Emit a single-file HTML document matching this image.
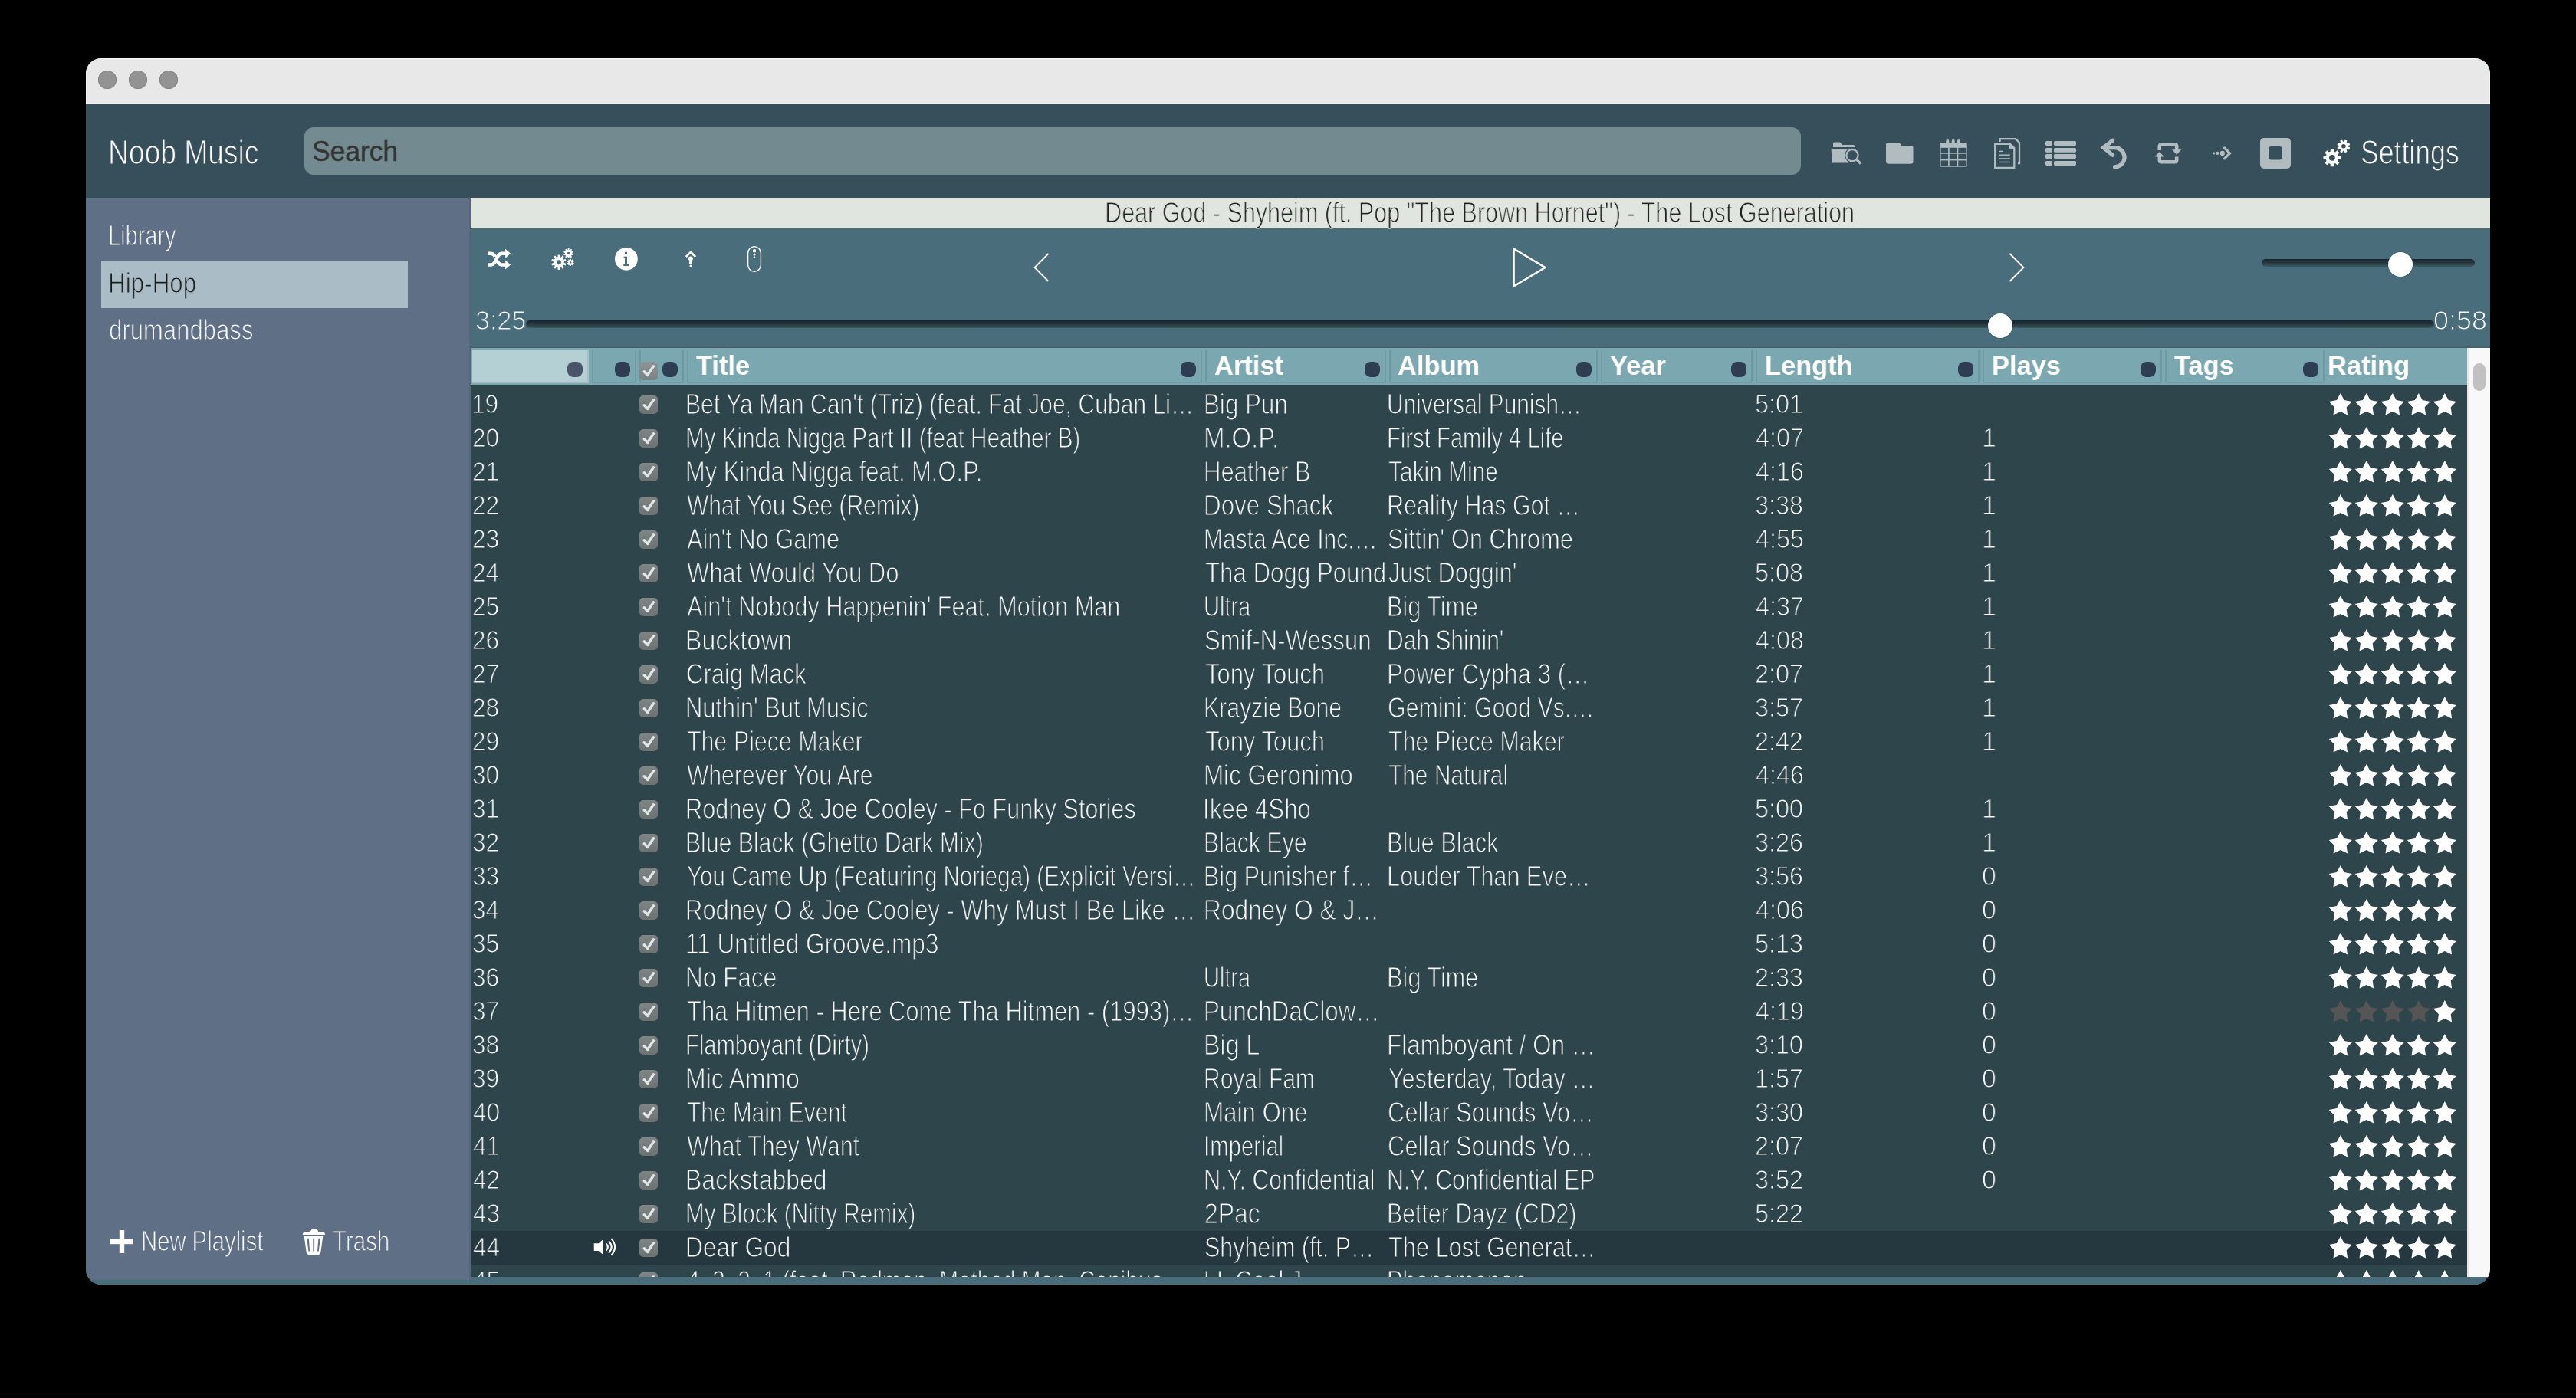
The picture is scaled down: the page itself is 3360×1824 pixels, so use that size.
<!DOCTYPE html><html><head><meta charset="utf-8"><style>
html,body{margin:0;padding:0;background:#000;width:3360px;height:1824px;overflow:hidden;}
.a{position:absolute;}
.t{position:absolute;white-space:pre;line-height:1;transform-origin:0 0;font-family:"Liberation Sans", sans-serif;will-change:transform;}
svg{position:absolute;overflow:visible;}
</style></head><body>
<div class="a" style="left:112px;top:76px;width:3136px;height:1600px;border-radius:20px;overflow:hidden;background:#4a6d7c;">
<div class="a" style="left:-112px;top:-76px;width:3360px;height:1824px;">
<div class="a" style="left:112px;top:76px;width:3136px;height:60px;background:#e8e8e8;box-shadow:inset 0 1px 0 rgba(255,255,255,.9),inset 1px 0 0 rgba(255,255,255,.5),inset -1px 0 0 rgba(255,255,255,.5),inset 0 -1px 0 rgba(255,255,255,.5);"></div>
<div class="a" style="left:128px;top:92px;width:24px;height:24px;border-radius:50%;background:#939393;box-shadow:inset 0 0 0 1px #858585;"></div>
<div class="a" style="left:168px;top:92px;width:24px;height:24px;border-radius:50%;background:#939393;box-shadow:inset 0 0 0 1px #858585;"></div>
<div class="a" style="left:208px;top:92px;width:24px;height:24px;border-radius:50%;background:#939393;box-shadow:inset 0 0 0 1px #858585;"></div>
<div class="a" style="left:112px;top:136px;width:3136px;height:122px;background:#374f5b;"></div>
<div class="a" style="left:397px;top:166px;width:1952px;height:62px;background:#728a90;border-radius:12px;"></div>
<div class="a" style="left:112px;top:258px;width:502px;height:1412px;background:#5e6f86;"></div>
<div class="a" style="left:612px;top:258px;width:2px;height:1412px;background:#56667c;"></div>
<div class="a" style="left:132px;top:340px;width:400px;height:62px;background:#aabdc6;"></div>
<div class="a" style="left:614px;top:258px;width:2634px;height:40px;background:#e0e6df;"></div>
<div class="a" style="left:614px;top:298px;width:2634px;height:156px;background:#4a6d7c;"></div>
<div class="a" style="left:614px;top:451px;width:2634px;height:3px;background:#44636f;"></div>
<div class="a" style="left:614px;top:454px;width:2604px;height:48px;background:#7ba8b0;"></div>
<div class="a" style="left:614px;top:502px;width:2604px;height:1164px;background:#2d454b;"></div>
<div class="a" style="left:614px;top:1606px;width:2604px;height:44px;background:#253840;"></div>
<div class="a" style="left:3218px;top:454px;width:30px;height:1212px;background:#f8f8f8;box-shadow:inset 2px 0 0 #e6e6e6;"></div>
<div class="a" style="left:3226px;top:474px;width:16px;height:36px;background:#c1c1c1;border-radius:8px;"></div>
<div class="a" style="left:112px;top:1670px;width:502px;height:6px;background:#4a6d7c;"></div>
<div class="a" style="left:616px;top:456px;width:152px;height:44px;box-sizing:border-box;background:#b5d0d4;border-right:2px solid #a9bfc3;border-bottom:2px solid #a9bfc3;"></div>
<div class="a" style="left:740px;top:472px;width:20px;height:20px;border-radius:8px;background:#495468;"></div>
<div class="a" style="left:772px;top:456px;width:58px;height:44px;box-sizing:border-box;border:2px solid #6e9aa2;border-top:none;"></div>
<div class="a" style="left:802px;top:472px;width:20px;height:20px;border-radius:8px;background:#2e3e52;"></div>
<div class="a" style="left:834px;top:456px;width:58px;height:44px;box-sizing:border-box;border:2px solid #6e9aa2;border-top:none;"></div>
<div class="a" style="left:864px;top:472px;width:20px;height:20px;border-radius:8px;background:#2e3e52;"></div>
<div class="a" style="left:896px;top:456px;width:672px;height:44px;box-sizing:border-box;border:2px solid #6e9aa2;border-top:none;"></div>
<div class="a" style="left:1540px;top:472px;width:20px;height:20px;border-radius:8px;background:#2e3e52;"></div>
<div class="a" style="left:1572px;top:456px;width:236px;height:44px;box-sizing:border-box;border:2px solid #6e9aa2;border-top:none;"></div>
<div class="a" style="left:1780px;top:472px;width:20px;height:20px;border-radius:8px;background:#2e3e52;"></div>
<div class="a" style="left:1812px;top:456px;width:272px;height:44px;box-sizing:border-box;border:2px solid #6e9aa2;border-top:none;"></div>
<div class="a" style="left:2056px;top:472px;width:20px;height:20px;border-radius:8px;background:#2e3e52;"></div>
<div class="a" style="left:2088px;top:456px;width:198px;height:44px;box-sizing:border-box;border:2px solid #6e9aa2;border-top:none;"></div>
<div class="a" style="left:2258px;top:472px;width:20px;height:20px;border-radius:8px;background:#2e3e52;"></div>
<div class="a" style="left:2290px;top:456px;width:292px;height:44px;box-sizing:border-box;border:2px solid #6e9aa2;border-top:none;"></div>
<div class="a" style="left:2554px;top:472px;width:20px;height:20px;border-radius:8px;background:#2e3e52;"></div>
<div class="a" style="left:2586px;top:456px;width:234px;height:44px;box-sizing:border-box;border:2px solid #6e9aa2;border-top:none;"></div>
<div class="a" style="left:2792px;top:472px;width:20px;height:20px;border-radius:8px;background:#2e3e52;"></div>
<div class="a" style="left:2824px;top:456px;width:208px;height:44px;box-sizing:border-box;border:2px solid #6e9aa2;border-top:none;"></div>
<div class="a" style="left:3004px;top:472px;width:20px;height:20px;border-radius:8px;background:#2e3e52;"></div>
<div class="a" style="left:834px;top:472px;width:24px;height:24px;border-radius:5px;background:linear-gradient(#8c9495,#7a8283);"></div>
<svg style="left:834px;top:472px" width="24" height="24"><path d="M6.2 12.8 L10.6 17.4 L18.4 5.8" fill="none" stroke="#e1e7e8" stroke-width="3.4" stroke-linecap="round" stroke-linejoin="round"/></svg>
<div class="a" style="left:834px;top:516px;width:24px;height:24px;border-radius:5px;background:linear-gradient(#7f8485,#6c7272);"></div>
<svg style="left:834px;top:516px" width="24" height="24"><path d="M6.2 12.8 L10.6 17.4 L18.4 5.8" fill="none" stroke="#e1e7e8" stroke-width="3.4" stroke-linecap="round" stroke-linejoin="round"/></svg>
<svg style="left:3000px;top:506px" width="220" height="44"><path d="M52.80,7.00 L57.68,16.09 L67.83,17.92 L60.69,25.36 L62.09,35.58 L52.80,31.10 L43.51,35.58 L44.91,25.36 L37.77,17.92 L47.92,16.09Z" fill="#fff"/><path d="M86.80,7.00 L91.68,16.09 L101.83,17.92 L94.69,25.36 L96.09,35.58 L86.80,31.10 L77.51,35.58 L78.91,25.36 L71.77,17.92 L81.92,16.09Z" fill="#fff"/><path d="M120.80,7.00 L125.68,16.09 L135.83,17.92 L128.69,25.36 L130.09,35.58 L120.80,31.10 L111.51,35.58 L112.91,25.36 L105.77,17.92 L115.92,16.09Z" fill="#fff"/><path d="M154.80,7.00 L159.68,16.09 L169.83,17.92 L162.69,25.36 L164.09,35.58 L154.80,31.10 L145.51,35.58 L146.91,25.36 L139.77,17.92 L149.92,16.09Z" fill="#fff"/><path d="M188.80,7.00 L193.68,16.09 L203.83,17.92 L196.69,25.36 L198.09,35.58 L188.80,31.10 L179.51,35.58 L180.91,25.36 L173.77,17.92 L183.92,16.09Z" fill="#fff"/></svg>
<div class="a" style="left:834px;top:560px;width:24px;height:24px;border-radius:5px;background:linear-gradient(#7f8485,#6c7272);"></div>
<svg style="left:834px;top:560px" width="24" height="24"><path d="M6.2 12.8 L10.6 17.4 L18.4 5.8" fill="none" stroke="#e1e7e8" stroke-width="3.4" stroke-linecap="round" stroke-linejoin="round"/></svg>
<svg style="left:3000px;top:550px" width="220" height="44"><path d="M52.80,7.00 L57.68,16.09 L67.83,17.92 L60.69,25.36 L62.09,35.58 L52.80,31.10 L43.51,35.58 L44.91,25.36 L37.77,17.92 L47.92,16.09Z" fill="#fff"/><path d="M86.80,7.00 L91.68,16.09 L101.83,17.92 L94.69,25.36 L96.09,35.58 L86.80,31.10 L77.51,35.58 L78.91,25.36 L71.77,17.92 L81.92,16.09Z" fill="#fff"/><path d="M120.80,7.00 L125.68,16.09 L135.83,17.92 L128.69,25.36 L130.09,35.58 L120.80,31.10 L111.51,35.58 L112.91,25.36 L105.77,17.92 L115.92,16.09Z" fill="#fff"/><path d="M154.80,7.00 L159.68,16.09 L169.83,17.92 L162.69,25.36 L164.09,35.58 L154.80,31.10 L145.51,35.58 L146.91,25.36 L139.77,17.92 L149.92,16.09Z" fill="#fff"/><path d="M188.80,7.00 L193.68,16.09 L203.83,17.92 L196.69,25.36 L198.09,35.58 L188.80,31.10 L179.51,35.58 L180.91,25.36 L173.77,17.92 L183.92,16.09Z" fill="#fff"/></svg>
<div class="a" style="left:834px;top:604px;width:24px;height:24px;border-radius:5px;background:linear-gradient(#7f8485,#6c7272);"></div>
<svg style="left:834px;top:604px" width="24" height="24"><path d="M6.2 12.8 L10.6 17.4 L18.4 5.8" fill="none" stroke="#e1e7e8" stroke-width="3.4" stroke-linecap="round" stroke-linejoin="round"/></svg>
<svg style="left:3000px;top:594px" width="220" height="44"><path d="M52.80,7.00 L57.68,16.09 L67.83,17.92 L60.69,25.36 L62.09,35.58 L52.80,31.10 L43.51,35.58 L44.91,25.36 L37.77,17.92 L47.92,16.09Z" fill="#fff"/><path d="M86.80,7.00 L91.68,16.09 L101.83,17.92 L94.69,25.36 L96.09,35.58 L86.80,31.10 L77.51,35.58 L78.91,25.36 L71.77,17.92 L81.92,16.09Z" fill="#fff"/><path d="M120.80,7.00 L125.68,16.09 L135.83,17.92 L128.69,25.36 L130.09,35.58 L120.80,31.10 L111.51,35.58 L112.91,25.36 L105.77,17.92 L115.92,16.09Z" fill="#fff"/><path d="M154.80,7.00 L159.68,16.09 L169.83,17.92 L162.69,25.36 L164.09,35.58 L154.80,31.10 L145.51,35.58 L146.91,25.36 L139.77,17.92 L149.92,16.09Z" fill="#fff"/><path d="M188.80,7.00 L193.68,16.09 L203.83,17.92 L196.69,25.36 L198.09,35.58 L188.80,31.10 L179.51,35.58 L180.91,25.36 L173.77,17.92 L183.92,16.09Z" fill="#fff"/></svg>
<div class="a" style="left:834px;top:648px;width:24px;height:24px;border-radius:5px;background:linear-gradient(#7f8485,#6c7272);"></div>
<svg style="left:834px;top:648px" width="24" height="24"><path d="M6.2 12.8 L10.6 17.4 L18.4 5.8" fill="none" stroke="#e1e7e8" stroke-width="3.4" stroke-linecap="round" stroke-linejoin="round"/></svg>
<svg style="left:3000px;top:638px" width="220" height="44"><path d="M52.80,7.00 L57.68,16.09 L67.83,17.92 L60.69,25.36 L62.09,35.58 L52.80,31.10 L43.51,35.58 L44.91,25.36 L37.77,17.92 L47.92,16.09Z" fill="#fff"/><path d="M86.80,7.00 L91.68,16.09 L101.83,17.92 L94.69,25.36 L96.09,35.58 L86.80,31.10 L77.51,35.58 L78.91,25.36 L71.77,17.92 L81.92,16.09Z" fill="#fff"/><path d="M120.80,7.00 L125.68,16.09 L135.83,17.92 L128.69,25.36 L130.09,35.58 L120.80,31.10 L111.51,35.58 L112.91,25.36 L105.77,17.92 L115.92,16.09Z" fill="#fff"/><path d="M154.80,7.00 L159.68,16.09 L169.83,17.92 L162.69,25.36 L164.09,35.58 L154.80,31.10 L145.51,35.58 L146.91,25.36 L139.77,17.92 L149.92,16.09Z" fill="#fff"/><path d="M188.80,7.00 L193.68,16.09 L203.83,17.92 L196.69,25.36 L198.09,35.58 L188.80,31.10 L179.51,35.58 L180.91,25.36 L173.77,17.92 L183.92,16.09Z" fill="#fff"/></svg>
<div class="a" style="left:834px;top:692px;width:24px;height:24px;border-radius:5px;background:linear-gradient(#7f8485,#6c7272);"></div>
<svg style="left:834px;top:692px" width="24" height="24"><path d="M6.2 12.8 L10.6 17.4 L18.4 5.8" fill="none" stroke="#e1e7e8" stroke-width="3.4" stroke-linecap="round" stroke-linejoin="round"/></svg>
<svg style="left:3000px;top:682px" width="220" height="44"><path d="M52.80,7.00 L57.68,16.09 L67.83,17.92 L60.69,25.36 L62.09,35.58 L52.80,31.10 L43.51,35.58 L44.91,25.36 L37.77,17.92 L47.92,16.09Z" fill="#fff"/><path d="M86.80,7.00 L91.68,16.09 L101.83,17.92 L94.69,25.36 L96.09,35.58 L86.80,31.10 L77.51,35.58 L78.91,25.36 L71.77,17.92 L81.92,16.09Z" fill="#fff"/><path d="M120.80,7.00 L125.68,16.09 L135.83,17.92 L128.69,25.36 L130.09,35.58 L120.80,31.10 L111.51,35.58 L112.91,25.36 L105.77,17.92 L115.92,16.09Z" fill="#fff"/><path d="M154.80,7.00 L159.68,16.09 L169.83,17.92 L162.69,25.36 L164.09,35.58 L154.80,31.10 L145.51,35.58 L146.91,25.36 L139.77,17.92 L149.92,16.09Z" fill="#fff"/><path d="M188.80,7.00 L193.68,16.09 L203.83,17.92 L196.69,25.36 L198.09,35.58 L188.80,31.10 L179.51,35.58 L180.91,25.36 L173.77,17.92 L183.92,16.09Z" fill="#fff"/></svg>
<div class="a" style="left:834px;top:736px;width:24px;height:24px;border-radius:5px;background:linear-gradient(#7f8485,#6c7272);"></div>
<svg style="left:834px;top:736px" width="24" height="24"><path d="M6.2 12.8 L10.6 17.4 L18.4 5.8" fill="none" stroke="#e1e7e8" stroke-width="3.4" stroke-linecap="round" stroke-linejoin="round"/></svg>
<svg style="left:3000px;top:726px" width="220" height="44"><path d="M52.80,7.00 L57.68,16.09 L67.83,17.92 L60.69,25.36 L62.09,35.58 L52.80,31.10 L43.51,35.58 L44.91,25.36 L37.77,17.92 L47.92,16.09Z" fill="#fff"/><path d="M86.80,7.00 L91.68,16.09 L101.83,17.92 L94.69,25.36 L96.09,35.58 L86.80,31.10 L77.51,35.58 L78.91,25.36 L71.77,17.92 L81.92,16.09Z" fill="#fff"/><path d="M120.80,7.00 L125.68,16.09 L135.83,17.92 L128.69,25.36 L130.09,35.58 L120.80,31.10 L111.51,35.58 L112.91,25.36 L105.77,17.92 L115.92,16.09Z" fill="#fff"/><path d="M154.80,7.00 L159.68,16.09 L169.83,17.92 L162.69,25.36 L164.09,35.58 L154.80,31.10 L145.51,35.58 L146.91,25.36 L139.77,17.92 L149.92,16.09Z" fill="#fff"/><path d="M188.80,7.00 L193.68,16.09 L203.83,17.92 L196.69,25.36 L198.09,35.58 L188.80,31.10 L179.51,35.58 L180.91,25.36 L173.77,17.92 L183.92,16.09Z" fill="#fff"/></svg>
<div class="a" style="left:834px;top:780px;width:24px;height:24px;border-radius:5px;background:linear-gradient(#7f8485,#6c7272);"></div>
<svg style="left:834px;top:780px" width="24" height="24"><path d="M6.2 12.8 L10.6 17.4 L18.4 5.8" fill="none" stroke="#e1e7e8" stroke-width="3.4" stroke-linecap="round" stroke-linejoin="round"/></svg>
<svg style="left:3000px;top:770px" width="220" height="44"><path d="M52.80,7.00 L57.68,16.09 L67.83,17.92 L60.69,25.36 L62.09,35.58 L52.80,31.10 L43.51,35.58 L44.91,25.36 L37.77,17.92 L47.92,16.09Z" fill="#fff"/><path d="M86.80,7.00 L91.68,16.09 L101.83,17.92 L94.69,25.36 L96.09,35.58 L86.80,31.10 L77.51,35.58 L78.91,25.36 L71.77,17.92 L81.92,16.09Z" fill="#fff"/><path d="M120.80,7.00 L125.68,16.09 L135.83,17.92 L128.69,25.36 L130.09,35.58 L120.80,31.10 L111.51,35.58 L112.91,25.36 L105.77,17.92 L115.92,16.09Z" fill="#fff"/><path d="M154.80,7.00 L159.68,16.09 L169.83,17.92 L162.69,25.36 L164.09,35.58 L154.80,31.10 L145.51,35.58 L146.91,25.36 L139.77,17.92 L149.92,16.09Z" fill="#fff"/><path d="M188.80,7.00 L193.68,16.09 L203.83,17.92 L196.69,25.36 L198.09,35.58 L188.80,31.10 L179.51,35.58 L180.91,25.36 L173.77,17.92 L183.92,16.09Z" fill="#fff"/></svg>
<div class="a" style="left:834px;top:824px;width:24px;height:24px;border-radius:5px;background:linear-gradient(#7f8485,#6c7272);"></div>
<svg style="left:834px;top:824px" width="24" height="24"><path d="M6.2 12.8 L10.6 17.4 L18.4 5.8" fill="none" stroke="#e1e7e8" stroke-width="3.4" stroke-linecap="round" stroke-linejoin="round"/></svg>
<svg style="left:3000px;top:814px" width="220" height="44"><path d="M52.80,7.00 L57.68,16.09 L67.83,17.92 L60.69,25.36 L62.09,35.58 L52.80,31.10 L43.51,35.58 L44.91,25.36 L37.77,17.92 L47.92,16.09Z" fill="#fff"/><path d="M86.80,7.00 L91.68,16.09 L101.83,17.92 L94.69,25.36 L96.09,35.58 L86.80,31.10 L77.51,35.58 L78.91,25.36 L71.77,17.92 L81.92,16.09Z" fill="#fff"/><path d="M120.80,7.00 L125.68,16.09 L135.83,17.92 L128.69,25.36 L130.09,35.58 L120.80,31.10 L111.51,35.58 L112.91,25.36 L105.77,17.92 L115.92,16.09Z" fill="#fff"/><path d="M154.80,7.00 L159.68,16.09 L169.83,17.92 L162.69,25.36 L164.09,35.58 L154.80,31.10 L145.51,35.58 L146.91,25.36 L139.77,17.92 L149.92,16.09Z" fill="#fff"/><path d="M188.80,7.00 L193.68,16.09 L203.83,17.92 L196.69,25.36 L198.09,35.58 L188.80,31.10 L179.51,35.58 L180.91,25.36 L173.77,17.92 L183.92,16.09Z" fill="#fff"/></svg>
<div class="a" style="left:834px;top:868px;width:24px;height:24px;border-radius:5px;background:linear-gradient(#7f8485,#6c7272);"></div>
<svg style="left:834px;top:868px" width="24" height="24"><path d="M6.2 12.8 L10.6 17.4 L18.4 5.8" fill="none" stroke="#e1e7e8" stroke-width="3.4" stroke-linecap="round" stroke-linejoin="round"/></svg>
<svg style="left:3000px;top:858px" width="220" height="44"><path d="M52.80,7.00 L57.68,16.09 L67.83,17.92 L60.69,25.36 L62.09,35.58 L52.80,31.10 L43.51,35.58 L44.91,25.36 L37.77,17.92 L47.92,16.09Z" fill="#fff"/><path d="M86.80,7.00 L91.68,16.09 L101.83,17.92 L94.69,25.36 L96.09,35.58 L86.80,31.10 L77.51,35.58 L78.91,25.36 L71.77,17.92 L81.92,16.09Z" fill="#fff"/><path d="M120.80,7.00 L125.68,16.09 L135.83,17.92 L128.69,25.36 L130.09,35.58 L120.80,31.10 L111.51,35.58 L112.91,25.36 L105.77,17.92 L115.92,16.09Z" fill="#fff"/><path d="M154.80,7.00 L159.68,16.09 L169.83,17.92 L162.69,25.36 L164.09,35.58 L154.80,31.10 L145.51,35.58 L146.91,25.36 L139.77,17.92 L149.92,16.09Z" fill="#fff"/><path d="M188.80,7.00 L193.68,16.09 L203.83,17.92 L196.69,25.36 L198.09,35.58 L188.80,31.10 L179.51,35.58 L180.91,25.36 L173.77,17.92 L183.92,16.09Z" fill="#fff"/></svg>
<div class="a" style="left:834px;top:912px;width:24px;height:24px;border-radius:5px;background:linear-gradient(#7f8485,#6c7272);"></div>
<svg style="left:834px;top:912px" width="24" height="24"><path d="M6.2 12.8 L10.6 17.4 L18.4 5.8" fill="none" stroke="#e1e7e8" stroke-width="3.4" stroke-linecap="round" stroke-linejoin="round"/></svg>
<svg style="left:3000px;top:902px" width="220" height="44"><path d="M52.80,7.00 L57.68,16.09 L67.83,17.92 L60.69,25.36 L62.09,35.58 L52.80,31.10 L43.51,35.58 L44.91,25.36 L37.77,17.92 L47.92,16.09Z" fill="#fff"/><path d="M86.80,7.00 L91.68,16.09 L101.83,17.92 L94.69,25.36 L96.09,35.58 L86.80,31.10 L77.51,35.58 L78.91,25.36 L71.77,17.92 L81.92,16.09Z" fill="#fff"/><path d="M120.80,7.00 L125.68,16.09 L135.83,17.92 L128.69,25.36 L130.09,35.58 L120.80,31.10 L111.51,35.58 L112.91,25.36 L105.77,17.92 L115.92,16.09Z" fill="#fff"/><path d="M154.80,7.00 L159.68,16.09 L169.83,17.92 L162.69,25.36 L164.09,35.58 L154.80,31.10 L145.51,35.58 L146.91,25.36 L139.77,17.92 L149.92,16.09Z" fill="#fff"/><path d="M188.80,7.00 L193.68,16.09 L203.83,17.92 L196.69,25.36 L198.09,35.58 L188.80,31.10 L179.51,35.58 L180.91,25.36 L173.77,17.92 L183.92,16.09Z" fill="#fff"/></svg>
<div class="a" style="left:834px;top:956px;width:24px;height:24px;border-radius:5px;background:linear-gradient(#7f8485,#6c7272);"></div>
<svg style="left:834px;top:956px" width="24" height="24"><path d="M6.2 12.8 L10.6 17.4 L18.4 5.8" fill="none" stroke="#e1e7e8" stroke-width="3.4" stroke-linecap="round" stroke-linejoin="round"/></svg>
<svg style="left:3000px;top:946px" width="220" height="44"><path d="M52.80,7.00 L57.68,16.09 L67.83,17.92 L60.69,25.36 L62.09,35.58 L52.80,31.10 L43.51,35.58 L44.91,25.36 L37.77,17.92 L47.92,16.09Z" fill="#fff"/><path d="M86.80,7.00 L91.68,16.09 L101.83,17.92 L94.69,25.36 L96.09,35.58 L86.80,31.10 L77.51,35.58 L78.91,25.36 L71.77,17.92 L81.92,16.09Z" fill="#fff"/><path d="M120.80,7.00 L125.68,16.09 L135.83,17.92 L128.69,25.36 L130.09,35.58 L120.80,31.10 L111.51,35.58 L112.91,25.36 L105.77,17.92 L115.92,16.09Z" fill="#fff"/><path d="M154.80,7.00 L159.68,16.09 L169.83,17.92 L162.69,25.36 L164.09,35.58 L154.80,31.10 L145.51,35.58 L146.91,25.36 L139.77,17.92 L149.92,16.09Z" fill="#fff"/><path d="M188.80,7.00 L193.68,16.09 L203.83,17.92 L196.69,25.36 L198.09,35.58 L188.80,31.10 L179.51,35.58 L180.91,25.36 L173.77,17.92 L183.92,16.09Z" fill="#fff"/></svg>
<div class="a" style="left:834px;top:1000px;width:24px;height:24px;border-radius:5px;background:linear-gradient(#7f8485,#6c7272);"></div>
<svg style="left:834px;top:1000px" width="24" height="24"><path d="M6.2 12.8 L10.6 17.4 L18.4 5.8" fill="none" stroke="#e1e7e8" stroke-width="3.4" stroke-linecap="round" stroke-linejoin="round"/></svg>
<svg style="left:3000px;top:990px" width="220" height="44"><path d="M52.80,7.00 L57.68,16.09 L67.83,17.92 L60.69,25.36 L62.09,35.58 L52.80,31.10 L43.51,35.58 L44.91,25.36 L37.77,17.92 L47.92,16.09Z" fill="#fff"/><path d="M86.80,7.00 L91.68,16.09 L101.83,17.92 L94.69,25.36 L96.09,35.58 L86.80,31.10 L77.51,35.58 L78.91,25.36 L71.77,17.92 L81.92,16.09Z" fill="#fff"/><path d="M120.80,7.00 L125.68,16.09 L135.83,17.92 L128.69,25.36 L130.09,35.58 L120.80,31.10 L111.51,35.58 L112.91,25.36 L105.77,17.92 L115.92,16.09Z" fill="#fff"/><path d="M154.80,7.00 L159.68,16.09 L169.83,17.92 L162.69,25.36 L164.09,35.58 L154.80,31.10 L145.51,35.58 L146.91,25.36 L139.77,17.92 L149.92,16.09Z" fill="#fff"/><path d="M188.80,7.00 L193.68,16.09 L203.83,17.92 L196.69,25.36 L198.09,35.58 L188.80,31.10 L179.51,35.58 L180.91,25.36 L173.77,17.92 L183.92,16.09Z" fill="#fff"/></svg>
<div class="a" style="left:834px;top:1044px;width:24px;height:24px;border-radius:5px;background:linear-gradient(#7f8485,#6c7272);"></div>
<svg style="left:834px;top:1044px" width="24" height="24"><path d="M6.2 12.8 L10.6 17.4 L18.4 5.8" fill="none" stroke="#e1e7e8" stroke-width="3.4" stroke-linecap="round" stroke-linejoin="round"/></svg>
<svg style="left:3000px;top:1034px" width="220" height="44"><path d="M52.80,7.00 L57.68,16.09 L67.83,17.92 L60.69,25.36 L62.09,35.58 L52.80,31.10 L43.51,35.58 L44.91,25.36 L37.77,17.92 L47.92,16.09Z" fill="#fff"/><path d="M86.80,7.00 L91.68,16.09 L101.83,17.92 L94.69,25.36 L96.09,35.58 L86.80,31.10 L77.51,35.58 L78.91,25.36 L71.77,17.92 L81.92,16.09Z" fill="#fff"/><path d="M120.80,7.00 L125.68,16.09 L135.83,17.92 L128.69,25.36 L130.09,35.58 L120.80,31.10 L111.51,35.58 L112.91,25.36 L105.77,17.92 L115.92,16.09Z" fill="#fff"/><path d="M154.80,7.00 L159.68,16.09 L169.83,17.92 L162.69,25.36 L164.09,35.58 L154.80,31.10 L145.51,35.58 L146.91,25.36 L139.77,17.92 L149.92,16.09Z" fill="#fff"/><path d="M188.80,7.00 L193.68,16.09 L203.83,17.92 L196.69,25.36 L198.09,35.58 L188.80,31.10 L179.51,35.58 L180.91,25.36 L173.77,17.92 L183.92,16.09Z" fill="#fff"/></svg>
<div class="a" style="left:834px;top:1088px;width:24px;height:24px;border-radius:5px;background:linear-gradient(#7f8485,#6c7272);"></div>
<svg style="left:834px;top:1088px" width="24" height="24"><path d="M6.2 12.8 L10.6 17.4 L18.4 5.8" fill="none" stroke="#e1e7e8" stroke-width="3.4" stroke-linecap="round" stroke-linejoin="round"/></svg>
<svg style="left:3000px;top:1078px" width="220" height="44"><path d="M52.80,7.00 L57.68,16.09 L67.83,17.92 L60.69,25.36 L62.09,35.58 L52.80,31.10 L43.51,35.58 L44.91,25.36 L37.77,17.92 L47.92,16.09Z" fill="#fff"/><path d="M86.80,7.00 L91.68,16.09 L101.83,17.92 L94.69,25.36 L96.09,35.58 L86.80,31.10 L77.51,35.58 L78.91,25.36 L71.77,17.92 L81.92,16.09Z" fill="#fff"/><path d="M120.80,7.00 L125.68,16.09 L135.83,17.92 L128.69,25.36 L130.09,35.58 L120.80,31.10 L111.51,35.58 L112.91,25.36 L105.77,17.92 L115.92,16.09Z" fill="#fff"/><path d="M154.80,7.00 L159.68,16.09 L169.83,17.92 L162.69,25.36 L164.09,35.58 L154.80,31.10 L145.51,35.58 L146.91,25.36 L139.77,17.92 L149.92,16.09Z" fill="#fff"/><path d="M188.80,7.00 L193.68,16.09 L203.83,17.92 L196.69,25.36 L198.09,35.58 L188.80,31.10 L179.51,35.58 L180.91,25.36 L173.77,17.92 L183.92,16.09Z" fill="#fff"/></svg>
<div class="a" style="left:834px;top:1132px;width:24px;height:24px;border-radius:5px;background:linear-gradient(#7f8485,#6c7272);"></div>
<svg style="left:834px;top:1132px" width="24" height="24"><path d="M6.2 12.8 L10.6 17.4 L18.4 5.8" fill="none" stroke="#e1e7e8" stroke-width="3.4" stroke-linecap="round" stroke-linejoin="round"/></svg>
<svg style="left:3000px;top:1122px" width="220" height="44"><path d="M52.80,7.00 L57.68,16.09 L67.83,17.92 L60.69,25.36 L62.09,35.58 L52.80,31.10 L43.51,35.58 L44.91,25.36 L37.77,17.92 L47.92,16.09Z" fill="#fff"/><path d="M86.80,7.00 L91.68,16.09 L101.83,17.92 L94.69,25.36 L96.09,35.58 L86.80,31.10 L77.51,35.58 L78.91,25.36 L71.77,17.92 L81.92,16.09Z" fill="#fff"/><path d="M120.80,7.00 L125.68,16.09 L135.83,17.92 L128.69,25.36 L130.09,35.58 L120.80,31.10 L111.51,35.58 L112.91,25.36 L105.77,17.92 L115.92,16.09Z" fill="#fff"/><path d="M154.80,7.00 L159.68,16.09 L169.83,17.92 L162.69,25.36 L164.09,35.58 L154.80,31.10 L145.51,35.58 L146.91,25.36 L139.77,17.92 L149.92,16.09Z" fill="#fff"/><path d="M188.80,7.00 L193.68,16.09 L203.83,17.92 L196.69,25.36 L198.09,35.58 L188.80,31.10 L179.51,35.58 L180.91,25.36 L173.77,17.92 L183.92,16.09Z" fill="#fff"/></svg>
<div class="a" style="left:834px;top:1176px;width:24px;height:24px;border-radius:5px;background:linear-gradient(#7f8485,#6c7272);"></div>
<svg style="left:834px;top:1176px" width="24" height="24"><path d="M6.2 12.8 L10.6 17.4 L18.4 5.8" fill="none" stroke="#e1e7e8" stroke-width="3.4" stroke-linecap="round" stroke-linejoin="round"/></svg>
<svg style="left:3000px;top:1166px" width="220" height="44"><path d="M52.80,7.00 L57.68,16.09 L67.83,17.92 L60.69,25.36 L62.09,35.58 L52.80,31.10 L43.51,35.58 L44.91,25.36 L37.77,17.92 L47.92,16.09Z" fill="#fff"/><path d="M86.80,7.00 L91.68,16.09 L101.83,17.92 L94.69,25.36 L96.09,35.58 L86.80,31.10 L77.51,35.58 L78.91,25.36 L71.77,17.92 L81.92,16.09Z" fill="#fff"/><path d="M120.80,7.00 L125.68,16.09 L135.83,17.92 L128.69,25.36 L130.09,35.58 L120.80,31.10 L111.51,35.58 L112.91,25.36 L105.77,17.92 L115.92,16.09Z" fill="#fff"/><path d="M154.80,7.00 L159.68,16.09 L169.83,17.92 L162.69,25.36 L164.09,35.58 L154.80,31.10 L145.51,35.58 L146.91,25.36 L139.77,17.92 L149.92,16.09Z" fill="#fff"/><path d="M188.80,7.00 L193.68,16.09 L203.83,17.92 L196.69,25.36 L198.09,35.58 L188.80,31.10 L179.51,35.58 L180.91,25.36 L173.77,17.92 L183.92,16.09Z" fill="#fff"/></svg>
<div class="a" style="left:834px;top:1220px;width:24px;height:24px;border-radius:5px;background:linear-gradient(#7f8485,#6c7272);"></div>
<svg style="left:834px;top:1220px" width="24" height="24"><path d="M6.2 12.8 L10.6 17.4 L18.4 5.8" fill="none" stroke="#e1e7e8" stroke-width="3.4" stroke-linecap="round" stroke-linejoin="round"/></svg>
<svg style="left:3000px;top:1210px" width="220" height="44"><path d="M52.80,7.00 L57.68,16.09 L67.83,17.92 L60.69,25.36 L62.09,35.58 L52.80,31.10 L43.51,35.58 L44.91,25.36 L37.77,17.92 L47.92,16.09Z" fill="#fff"/><path d="M86.80,7.00 L91.68,16.09 L101.83,17.92 L94.69,25.36 L96.09,35.58 L86.80,31.10 L77.51,35.58 L78.91,25.36 L71.77,17.92 L81.92,16.09Z" fill="#fff"/><path d="M120.80,7.00 L125.68,16.09 L135.83,17.92 L128.69,25.36 L130.09,35.58 L120.80,31.10 L111.51,35.58 L112.91,25.36 L105.77,17.92 L115.92,16.09Z" fill="#fff"/><path d="M154.80,7.00 L159.68,16.09 L169.83,17.92 L162.69,25.36 L164.09,35.58 L154.80,31.10 L145.51,35.58 L146.91,25.36 L139.77,17.92 L149.92,16.09Z" fill="#fff"/><path d="M188.80,7.00 L193.68,16.09 L203.83,17.92 L196.69,25.36 L198.09,35.58 L188.80,31.10 L179.51,35.58 L180.91,25.36 L173.77,17.92 L183.92,16.09Z" fill="#fff"/></svg>
<div class="a" style="left:834px;top:1264px;width:24px;height:24px;border-radius:5px;background:linear-gradient(#7f8485,#6c7272);"></div>
<svg style="left:834px;top:1264px" width="24" height="24"><path d="M6.2 12.8 L10.6 17.4 L18.4 5.8" fill="none" stroke="#e1e7e8" stroke-width="3.4" stroke-linecap="round" stroke-linejoin="round"/></svg>
<svg style="left:3000px;top:1254px" width="220" height="44"><path d="M52.80,7.00 L57.68,16.09 L67.83,17.92 L60.69,25.36 L62.09,35.58 L52.80,31.10 L43.51,35.58 L44.91,25.36 L37.77,17.92 L47.92,16.09Z" fill="#fff"/><path d="M86.80,7.00 L91.68,16.09 L101.83,17.92 L94.69,25.36 L96.09,35.58 L86.80,31.10 L77.51,35.58 L78.91,25.36 L71.77,17.92 L81.92,16.09Z" fill="#fff"/><path d="M120.80,7.00 L125.68,16.09 L135.83,17.92 L128.69,25.36 L130.09,35.58 L120.80,31.10 L111.51,35.58 L112.91,25.36 L105.77,17.92 L115.92,16.09Z" fill="#fff"/><path d="M154.80,7.00 L159.68,16.09 L169.83,17.92 L162.69,25.36 L164.09,35.58 L154.80,31.10 L145.51,35.58 L146.91,25.36 L139.77,17.92 L149.92,16.09Z" fill="#fff"/><path d="M188.80,7.00 L193.68,16.09 L203.83,17.92 L196.69,25.36 L198.09,35.58 L188.80,31.10 L179.51,35.58 L180.91,25.36 L173.77,17.92 L183.92,16.09Z" fill="#fff"/></svg>
<div class="a" style="left:834px;top:1308px;width:24px;height:24px;border-radius:5px;background:linear-gradient(#7f8485,#6c7272);"></div>
<svg style="left:834px;top:1308px" width="24" height="24"><path d="M6.2 12.8 L10.6 17.4 L18.4 5.8" fill="none" stroke="#e1e7e8" stroke-width="3.4" stroke-linecap="round" stroke-linejoin="round"/></svg>
<svg style="left:3000px;top:1298px" width="220" height="44"><path d="M52.80,7.00 L57.68,16.09 L67.83,17.92 L60.69,25.36 L62.09,35.58 L52.80,31.10 L43.51,35.58 L44.91,25.36 L37.77,17.92 L47.92,16.09Z" fill="#555"/><path d="M86.80,7.00 L91.68,16.09 L101.83,17.92 L94.69,25.36 L96.09,35.58 L86.80,31.10 L77.51,35.58 L78.91,25.36 L71.77,17.92 L81.92,16.09Z" fill="#555"/><path d="M120.80,7.00 L125.68,16.09 L135.83,17.92 L128.69,25.36 L130.09,35.58 L120.80,31.10 L111.51,35.58 L112.91,25.36 L105.77,17.92 L115.92,16.09Z" fill="#555"/><path d="M154.80,7.00 L159.68,16.09 L169.83,17.92 L162.69,25.36 L164.09,35.58 L154.80,31.10 L145.51,35.58 L146.91,25.36 L139.77,17.92 L149.92,16.09Z" fill="#555"/><path d="M188.80,7.00 L193.68,16.09 L203.83,17.92 L196.69,25.36 L198.09,35.58 L188.80,31.10 L179.51,35.58 L180.91,25.36 L173.77,17.92 L183.92,16.09Z" fill="#fff"/></svg>
<div class="a" style="left:834px;top:1352px;width:24px;height:24px;border-radius:5px;background:linear-gradient(#7f8485,#6c7272);"></div>
<svg style="left:834px;top:1352px" width="24" height="24"><path d="M6.2 12.8 L10.6 17.4 L18.4 5.8" fill="none" stroke="#e1e7e8" stroke-width="3.4" stroke-linecap="round" stroke-linejoin="round"/></svg>
<svg style="left:3000px;top:1342px" width="220" height="44"><path d="M52.80,7.00 L57.68,16.09 L67.83,17.92 L60.69,25.36 L62.09,35.58 L52.80,31.10 L43.51,35.58 L44.91,25.36 L37.77,17.92 L47.92,16.09Z" fill="#fff"/><path d="M86.80,7.00 L91.68,16.09 L101.83,17.92 L94.69,25.36 L96.09,35.58 L86.80,31.10 L77.51,35.58 L78.91,25.36 L71.77,17.92 L81.92,16.09Z" fill="#fff"/><path d="M120.80,7.00 L125.68,16.09 L135.83,17.92 L128.69,25.36 L130.09,35.58 L120.80,31.10 L111.51,35.58 L112.91,25.36 L105.77,17.92 L115.92,16.09Z" fill="#fff"/><path d="M154.80,7.00 L159.68,16.09 L169.83,17.92 L162.69,25.36 L164.09,35.58 L154.80,31.10 L145.51,35.58 L146.91,25.36 L139.77,17.92 L149.92,16.09Z" fill="#fff"/><path d="M188.80,7.00 L193.68,16.09 L203.83,17.92 L196.69,25.36 L198.09,35.58 L188.80,31.10 L179.51,35.58 L180.91,25.36 L173.77,17.92 L183.92,16.09Z" fill="#fff"/></svg>
<div class="a" style="left:834px;top:1396px;width:24px;height:24px;border-radius:5px;background:linear-gradient(#7f8485,#6c7272);"></div>
<svg style="left:834px;top:1396px" width="24" height="24"><path d="M6.2 12.8 L10.6 17.4 L18.4 5.8" fill="none" stroke="#e1e7e8" stroke-width="3.4" stroke-linecap="round" stroke-linejoin="round"/></svg>
<svg style="left:3000px;top:1386px" width="220" height="44"><path d="M52.80,7.00 L57.68,16.09 L67.83,17.92 L60.69,25.36 L62.09,35.58 L52.80,31.10 L43.51,35.58 L44.91,25.36 L37.77,17.92 L47.92,16.09Z" fill="#fff"/><path d="M86.80,7.00 L91.68,16.09 L101.83,17.92 L94.69,25.36 L96.09,35.58 L86.80,31.10 L77.51,35.58 L78.91,25.36 L71.77,17.92 L81.92,16.09Z" fill="#fff"/><path d="M120.80,7.00 L125.68,16.09 L135.83,17.92 L128.69,25.36 L130.09,35.58 L120.80,31.10 L111.51,35.58 L112.91,25.36 L105.77,17.92 L115.92,16.09Z" fill="#fff"/><path d="M154.80,7.00 L159.68,16.09 L169.83,17.92 L162.69,25.36 L164.09,35.58 L154.80,31.10 L145.51,35.58 L146.91,25.36 L139.77,17.92 L149.92,16.09Z" fill="#fff"/><path d="M188.80,7.00 L193.68,16.09 L203.83,17.92 L196.69,25.36 L198.09,35.58 L188.80,31.10 L179.51,35.58 L180.91,25.36 L173.77,17.92 L183.92,16.09Z" fill="#fff"/></svg>
<div class="a" style="left:834px;top:1440px;width:24px;height:24px;border-radius:5px;background:linear-gradient(#7f8485,#6c7272);"></div>
<svg style="left:834px;top:1440px" width="24" height="24"><path d="M6.2 12.8 L10.6 17.4 L18.4 5.8" fill="none" stroke="#e1e7e8" stroke-width="3.4" stroke-linecap="round" stroke-linejoin="round"/></svg>
<svg style="left:3000px;top:1430px" width="220" height="44"><path d="M52.80,7.00 L57.68,16.09 L67.83,17.92 L60.69,25.36 L62.09,35.58 L52.80,31.10 L43.51,35.58 L44.91,25.36 L37.77,17.92 L47.92,16.09Z" fill="#fff"/><path d="M86.80,7.00 L91.68,16.09 L101.83,17.92 L94.69,25.36 L96.09,35.58 L86.80,31.10 L77.51,35.58 L78.91,25.36 L71.77,17.92 L81.92,16.09Z" fill="#fff"/><path d="M120.80,7.00 L125.68,16.09 L135.83,17.92 L128.69,25.36 L130.09,35.58 L120.80,31.10 L111.51,35.58 L112.91,25.36 L105.77,17.92 L115.92,16.09Z" fill="#fff"/><path d="M154.80,7.00 L159.68,16.09 L169.83,17.92 L162.69,25.36 L164.09,35.58 L154.80,31.10 L145.51,35.58 L146.91,25.36 L139.77,17.92 L149.92,16.09Z" fill="#fff"/><path d="M188.80,7.00 L193.68,16.09 L203.83,17.92 L196.69,25.36 L198.09,35.58 L188.80,31.10 L179.51,35.58 L180.91,25.36 L173.77,17.92 L183.92,16.09Z" fill="#fff"/></svg>
<div class="a" style="left:834px;top:1484px;width:24px;height:24px;border-radius:5px;background:linear-gradient(#7f8485,#6c7272);"></div>
<svg style="left:834px;top:1484px" width="24" height="24"><path d="M6.2 12.8 L10.6 17.4 L18.4 5.8" fill="none" stroke="#e1e7e8" stroke-width="3.4" stroke-linecap="round" stroke-linejoin="round"/></svg>
<svg style="left:3000px;top:1474px" width="220" height="44"><path d="M52.80,7.00 L57.68,16.09 L67.83,17.92 L60.69,25.36 L62.09,35.58 L52.80,31.10 L43.51,35.58 L44.91,25.36 L37.77,17.92 L47.92,16.09Z" fill="#fff"/><path d="M86.80,7.00 L91.68,16.09 L101.83,17.92 L94.69,25.36 L96.09,35.58 L86.80,31.10 L77.51,35.58 L78.91,25.36 L71.77,17.92 L81.92,16.09Z" fill="#fff"/><path d="M120.80,7.00 L125.68,16.09 L135.83,17.92 L128.69,25.36 L130.09,35.58 L120.80,31.10 L111.51,35.58 L112.91,25.36 L105.77,17.92 L115.92,16.09Z" fill="#fff"/><path d="M154.80,7.00 L159.68,16.09 L169.83,17.92 L162.69,25.36 L164.09,35.58 L154.80,31.10 L145.51,35.58 L146.91,25.36 L139.77,17.92 L149.92,16.09Z" fill="#fff"/><path d="M188.80,7.00 L193.68,16.09 L203.83,17.92 L196.69,25.36 L198.09,35.58 L188.80,31.10 L179.51,35.58 L180.91,25.36 L173.77,17.92 L183.92,16.09Z" fill="#fff"/></svg>
<div class="a" style="left:834px;top:1528px;width:24px;height:24px;border-radius:5px;background:linear-gradient(#7f8485,#6c7272);"></div>
<svg style="left:834px;top:1528px" width="24" height="24"><path d="M6.2 12.8 L10.6 17.4 L18.4 5.8" fill="none" stroke="#e1e7e8" stroke-width="3.4" stroke-linecap="round" stroke-linejoin="round"/></svg>
<svg style="left:3000px;top:1518px" width="220" height="44"><path d="M52.80,7.00 L57.68,16.09 L67.83,17.92 L60.69,25.36 L62.09,35.58 L52.80,31.10 L43.51,35.58 L44.91,25.36 L37.77,17.92 L47.92,16.09Z" fill="#fff"/><path d="M86.80,7.00 L91.68,16.09 L101.83,17.92 L94.69,25.36 L96.09,35.58 L86.80,31.10 L77.51,35.58 L78.91,25.36 L71.77,17.92 L81.92,16.09Z" fill="#fff"/><path d="M120.80,7.00 L125.68,16.09 L135.83,17.92 L128.69,25.36 L130.09,35.58 L120.80,31.10 L111.51,35.58 L112.91,25.36 L105.77,17.92 L115.92,16.09Z" fill="#fff"/><path d="M154.80,7.00 L159.68,16.09 L169.83,17.92 L162.69,25.36 L164.09,35.58 L154.80,31.10 L145.51,35.58 L146.91,25.36 L139.77,17.92 L149.92,16.09Z" fill="#fff"/><path d="M188.80,7.00 L193.68,16.09 L203.83,17.92 L196.69,25.36 L198.09,35.58 L188.80,31.10 L179.51,35.58 L180.91,25.36 L173.77,17.92 L183.92,16.09Z" fill="#fff"/></svg>
<div class="a" style="left:834px;top:1572px;width:24px;height:24px;border-radius:5px;background:linear-gradient(#7f8485,#6c7272);"></div>
<svg style="left:834px;top:1572px" width="24" height="24"><path d="M6.2 12.8 L10.6 17.4 L18.4 5.8" fill="none" stroke="#e1e7e8" stroke-width="3.4" stroke-linecap="round" stroke-linejoin="round"/></svg>
<svg style="left:3000px;top:1562px" width="220" height="44"><path d="M52.80,7.00 L57.68,16.09 L67.83,17.92 L60.69,25.36 L62.09,35.58 L52.80,31.10 L43.51,35.58 L44.91,25.36 L37.77,17.92 L47.92,16.09Z" fill="#fff"/><path d="M86.80,7.00 L91.68,16.09 L101.83,17.92 L94.69,25.36 L96.09,35.58 L86.80,31.10 L77.51,35.58 L78.91,25.36 L71.77,17.92 L81.92,16.09Z" fill="#fff"/><path d="M120.80,7.00 L125.68,16.09 L135.83,17.92 L128.69,25.36 L130.09,35.58 L120.80,31.10 L111.51,35.58 L112.91,25.36 L105.77,17.92 L115.92,16.09Z" fill="#fff"/><path d="M154.80,7.00 L159.68,16.09 L169.83,17.92 L162.69,25.36 L164.09,35.58 L154.80,31.10 L145.51,35.58 L146.91,25.36 L139.77,17.92 L149.92,16.09Z" fill="#fff"/><path d="M188.80,7.00 L193.68,16.09 L203.83,17.92 L196.69,25.36 L198.09,35.58 L188.80,31.10 L179.51,35.58 L180.91,25.36 L173.77,17.92 L183.92,16.09Z" fill="#fff"/></svg>
<div class="a" style="left:834px;top:1616px;width:24px;height:24px;border-radius:5px;background:linear-gradient(#7f8485,#6c7272);"></div>
<svg style="left:834px;top:1616px" width="24" height="24"><path d="M6.2 12.8 L10.6 17.4 L18.4 5.8" fill="none" stroke="#e1e7e8" stroke-width="3.4" stroke-linecap="round" stroke-linejoin="round"/></svg>
<svg style="left:3000px;top:1606px" width="220" height="44"><path d="M52.80,7.00 L57.68,16.09 L67.83,17.92 L60.69,25.36 L62.09,35.58 L52.80,31.10 L43.51,35.58 L44.91,25.36 L37.77,17.92 L47.92,16.09Z" fill="#fff"/><path d="M86.80,7.00 L91.68,16.09 L101.83,17.92 L94.69,25.36 L96.09,35.58 L86.80,31.10 L77.51,35.58 L78.91,25.36 L71.77,17.92 L81.92,16.09Z" fill="#fff"/><path d="M120.80,7.00 L125.68,16.09 L135.83,17.92 L128.69,25.36 L130.09,35.58 L120.80,31.10 L111.51,35.58 L112.91,25.36 L105.77,17.92 L115.92,16.09Z" fill="#fff"/><path d="M154.80,7.00 L159.68,16.09 L169.83,17.92 L162.69,25.36 L164.09,35.58 L154.80,31.10 L145.51,35.58 L146.91,25.36 L139.77,17.92 L149.92,16.09Z" fill="#fff"/><path d="M188.80,7.00 L193.68,16.09 L203.83,17.92 L196.69,25.36 L198.09,35.58 L188.80,31.10 L179.51,35.58 L180.91,25.36 L173.77,17.92 L183.92,16.09Z" fill="#fff"/></svg>
<div class="a" style="left:834px;top:1660px;width:24px;height:24px;border-radius:5px;background:linear-gradient(#7f8485,#6c7272);"></div>
<svg style="left:834px;top:1660px" width="24" height="24"><path d="M6.2 12.8 L10.6 17.4 L18.4 5.8" fill="none" stroke="#e1e7e8" stroke-width="3.4" stroke-linecap="round" stroke-linejoin="round"/></svg>
<svg style="left:3000px;top:1650px" width="220" height="44"><path d="M52.80,7.00 L57.68,16.09 L67.83,17.92 L60.69,25.36 L62.09,35.58 L52.80,31.10 L43.51,35.58 L44.91,25.36 L37.77,17.92 L47.92,16.09Z" fill="#fff"/><path d="M86.80,7.00 L91.68,16.09 L101.83,17.92 L94.69,25.36 L96.09,35.58 L86.80,31.10 L77.51,35.58 L78.91,25.36 L71.77,17.92 L81.92,16.09Z" fill="#fff"/><path d="M120.80,7.00 L125.68,16.09 L135.83,17.92 L128.69,25.36 L130.09,35.58 L120.80,31.10 L111.51,35.58 L112.91,25.36 L105.77,17.92 L115.92,16.09Z" fill="#fff"/><path d="M154.80,7.00 L159.68,16.09 L169.83,17.92 L162.69,25.36 L164.09,35.58 L154.80,31.10 L145.51,35.58 L146.91,25.36 L139.77,17.92 L149.92,16.09Z" fill="#fff"/><path d="M188.80,7.00 L193.68,16.09 L203.83,17.92 L196.69,25.36 L198.09,35.58 L188.80,31.10 L179.51,35.58 L180.91,25.36 L173.77,17.92 L183.92,16.09Z" fill="#fff"/></svg>
<svg style="left:765px;top:1608px" width="45" height="38"><g fill="#fff"><rect x="8" y="14.3" width="1.2" height="9.6"/><path d="M9.9 14.3 H15.8 L21.9 8.8 V29.2 L15.8 23.9 H9.9Z"/></g><g fill="none" stroke="#fff" stroke-width="2.1" stroke-linecap="round"><path d="M26.1 15.2 Q29.6 19 26.1 23.1"/><path d="M29.6 12 Q35.8 19 29.6 26.1"/><path d="M32.9 8.7 Q41.3 19 32.9 29.2"/></g></svg>
<div class="a" style="left:686px;top:418px;width:2489px;height:10px;background:#000;background:linear-gradient(#18252b,#2a3d45 60%,#3f5a66);border-radius:5px;"></div>
<div class="a" style="left:2593px;top:409px;width:32px;height:32px;border-radius:50%;background:#fff;box-shadow:0 0 2px rgba(0,0,0,.35);"></div>
<div class="a" style="left:2950px;top:338px;width:278px;height:10px;background:#000;background:linear-gradient(#18252b,#2a3d45 60%,#3f5a66);border-radius:5px;"></div>
<div class="a" style="left:3115px;top:329px;width:32px;height:32px;border-radius:50%;background:#fff;box-shadow:0 0 2px rgba(0,0,0,.35);"></div>
<svg style="left:0;top:0" width="3360" height="1824"><path d="M1367.5 331 L1349.5 349 L1367.5 367" fill="none" stroke="#fff" stroke-width="1.8"/><path d="M2621.5 331 L2639.5 349 L2621.5 367" fill="none" stroke="#fff" stroke-width="1.8"/><path d="M1974.5 324.5 L2015.5 349 L1974.5 373.5Z" fill="none" stroke="#fff" stroke-width="2.6" stroke-linejoin="round"/></svg>
<svg style="left:0;top:0" width="3360" height="1824"><path d="M2391 194 V187.5 Q2391 185.5 2393 185.5 H2400 L2403 189 H2417.5 Q2419 189 2419 191 V192 H2391Z" fill="#b1bcc1"/><path d="M2388.5 194 H2411 V212.5 H2390 Z" fill="#b1bcc1"/><circle cx="2416" cy="202.6" r="9.8" fill="#374f5b"/><circle cx="2416" cy="202.6" r="7.6" fill="none" stroke="#b1bcc1" stroke-width="2.3"/><path d="M2421.5 208 L2427 213.5" stroke="#b1bcc1" stroke-width="3.2"/><path d="M2460 189 Q2460 186.3 2463 186.3 H2477.5 L2480.5 190 H2492.5 Q2495.5 190 2495.5 193 V210.7 Q2495.5 213.7 2492.5 213.7 H2463 Q2460 213.7 2460 210.7Z" fill="#b1bcc1"/><rect x="2530" y="186.3" width="35.6" height="6.5" fill="#b1bcc1"/><rect x="2538.3" y="182" width="4" height="6" rx="2" fill="#b1bcc1"/><rect x="2545.7" y="182" width="4" height="6" rx="2" fill="#b1bcc1"/><rect x="2553" y="182" width="4" height="6" rx="2" fill="#b1bcc1"/><rect x="2530.8" y="191" width="34" height="25.9" fill="none" stroke="#b1bcc1" stroke-width="1.6"/><rect x="2541.1" y="191" width="1.6" height="26" fill="#b1bcc1"/><rect x="2552.7" y="191" width="1.6" height="26" fill="#b1bcc1"/><rect x="2530" y="199.1" width="35.6" height="1.6" fill="#b1bcc1"/><rect x="2530" y="207.79999999999998" width="35.6" height="1.6" fill="#b1bcc1"/><path d="M2608.6 185 V181.2 H2629 L2634 186.2 V213 H2632" fill="none" stroke="#b1bcc1" stroke-width="2.3"/><path d="M2602.2 219 V187.8 H2622 L2627.3 193.1 V219 Z" fill="none" stroke="#b1bcc1" stroke-width="2.3"/><path d="M2621.6 187.8 V193.5 H2627.3" fill="#b1bcc1" stroke="#b1bcc1" stroke-width="1.5"/><rect x="2607" y="196.70000000000002" width="6" height="1.4" fill="#b1bcc1"/><rect x="2607" y="201.5" width="14.800000000000182" height="1.4" fill="#b1bcc1"/><rect x="2607" y="206.20000000000002" width="14.800000000000182" height="1.4" fill="#b1bcc1"/><rect x="2607" y="210.8" width="14.800000000000182" height="1.4" fill="#b1bcc1"/><rect x="2668" y="184" width="9" height="5.9" rx="1.6" fill="#b1bcc1"/><rect x="2679" y="184" width="29" height="5.9" rx="1.6" fill="#b1bcc1"/><rect x="2668" y="192.9" width="9" height="5.9" rx="1.6" fill="#b1bcc1"/><rect x="2679" y="192.9" width="29" height="5.9" rx="1.6" fill="#b1bcc1"/><rect x="2668" y="201" width="9" height="5.9" rx="1.6" fill="#b1bcc1"/><rect x="2679" y="201" width="29" height="5.9" rx="1.6" fill="#b1bcc1"/><rect x="2668" y="210" width="9" height="5.9" rx="1.6" fill="#b1bcc1"/><rect x="2679" y="210" width="29" height="5.9" rx="1.6" fill="#b1bcc1"/><path d="M2755.6 183.2 L2743.6 192.6 L2755.6 202.2" fill="none" stroke="#b1bcc1" stroke-width="5.2" stroke-linecap="round" stroke-linejoin="miter"/><path d="M2746 192.6 H2758.5 A12.6 12.6 0 0 1 2758.5 217.8" fill="none" stroke="#b1bcc1" stroke-width="5.2" stroke-linecap="round"/><path d="M2816.8 196 V191 Q2816.8 188.6 2819.2 188.6 H2836.8 Q2839.2 188.6 2839.2 191 V196" fill="none" stroke="#b1bcc1" stroke-width="4.6"/><path d="M2833 195.2 H2845.4 L2839.2 201.8Z" fill="#b1bcc1"/><path d="M2839.2 204.5 V209 Q2839.2 211.3 2836.8 211.3 H2819.2 Q2816.8 211.3 2816.8 209 V204" fill="none" stroke="#b1bcc1" stroke-width="4.6"/><path d="M2810.5 204.5 H2822.9 L2816.7 198Z" fill="#b1bcc1"/><circle cx="2887.6" cy="199.9" r="1.7" fill="#b1bcc1"/><circle cx="2892.4" cy="199.9" r="2.1" fill="#b1bcc1"/><circle cx="2898.8" cy="199.9" r="3.1" fill="#b1bcc1"/><path d="M2901.5 193 L2908.5 199.9 L2901.5 206.8" fill="none" stroke="#b1bcc1" stroke-width="3.2" stroke-linecap="round"/><path d="M2953.4 180 H2982.6 Q2988 180 2988 185.4 V214.6 Q2988 220 2982.6 220 H2953.4 Q2948 220 2948 214.6 V185.4 Q2948 180 2953.4 180Z M2962.5 191.1 Q2959 191.1 2959 194.6 V205.1 Q2959 208.6 2962.5 208.6 H2973.4 Q2976.9 208.6 2976.9 205.1 V194.6 Q2976.9 191.1 2973.4 191.1Z" fill="#b1bcc1" fill-rule="evenodd"/><path d="M3039.68,197.70 L3039.81,194.39 L3043.99,194.39 L3044.12,197.70 L3046.06,198.50 L3048.49,196.25 L3051.45,199.21 L3049.20,201.64 L3050.00,203.58 L3053.31,203.71 L3053.31,207.89 L3050.00,208.02 L3049.20,209.96 L3051.45,212.39 L3048.49,215.35 L3046.06,213.10 L3044.12,213.90 L3043.99,217.21 L3039.81,217.21 L3039.68,213.90 L3037.74,213.10 L3035.31,215.35 L3032.35,212.39 L3034.60,209.96 L3033.80,208.02 L3030.49,207.89 L3030.49,203.71 L3033.80,203.58 L3034.60,201.64 L3032.35,199.21 L3035.31,196.25 L3037.74,198.50Z M3045.80,205.80 A3.9,3.9 0 1 0 3038.00,205.80 A3.9,3.9 0 1 0 3045.80,205.80Z" fill="#fff" fill-rule="evenodd"/><path d="M3057.66,184.75 L3058.70,182.39 L3061.57,183.58 L3060.64,185.98 L3061.72,187.06 L3064.12,186.13 L3065.31,189.00 L3062.95,190.04 L3062.95,191.56 L3065.31,192.60 L3064.12,195.47 L3061.72,194.54 L3060.64,195.62 L3061.57,198.02 L3058.70,199.21 L3057.66,196.85 L3056.14,196.85 L3055.10,199.21 L3052.23,198.02 L3053.16,195.62 L3052.08,194.54 L3049.68,195.47 L3048.49,192.60 L3050.85,191.56 L3050.85,190.04 L3048.49,189.00 L3049.68,186.13 L3052.08,187.06 L3053.16,185.98 L3052.23,183.58 L3055.10,182.39 L3056.14,184.75Z M3059.70,190.80 A2.8,2.8 0 1 0 3054.10,190.80 A2.8,2.8 0 1 0 3059.70,190.80Z" fill="#fff" fill-rule="evenodd"/><path d="M636 330.8 H640.5 C648 330.8 647 345.5 654.5 345.5 H660" fill="none" stroke="#fff" stroke-width="4.4"/><path d="M646.6 340.2 L648.4 336.1" fill="none" stroke="#4a6d7c" stroke-width="6.8"/><path d="M636 345.5 H640.5 C648 345.5 647 330.8 654.5 330.8 H660" fill="none" stroke="#fff" stroke-width="4.4"/><path d="M659.2 324.8 L666 330.8 L659.2 336.8Z M659.2 339.6 L666 345.5 L659.2 351.4Z" fill="#fff"/><path d="M727.55,335.33 L727.61,332.49 L730.19,332.49 L730.25,335.33 L731.84,335.85 L733.57,333.58 L735.65,335.10 L734.03,337.44 L735.01,338.79 L737.74,337.97 L738.54,340.42 L735.85,341.37 L735.85,343.03 L738.54,343.98 L737.74,346.43 L735.01,345.61 L734.03,346.96 L735.65,349.30 L733.57,350.82 L731.84,348.55 L730.25,349.07 L730.19,351.91 L727.61,351.91 L727.55,349.07 L725.96,348.55 L724.23,350.82 L722.15,349.30 L723.77,346.96 L722.79,345.61 L720.06,346.43 L719.26,343.98 L721.95,343.03 L721.95,341.37 L719.26,340.42 L720.06,337.97 L722.79,338.79 L723.77,337.44 L722.15,335.10 L724.23,333.58 L725.96,335.85Z M731.90,342.20 A3.0,3.0 0 1 0 725.90,342.20 A3.0,3.0 0 1 0 731.90,342.20Z" fill="#fff" fill-rule="evenodd"/><path d="M740.69,325.89 L740.74,324.06 L742.46,324.06 L742.51,325.89 L743.57,326.23 L744.70,324.78 L746.08,325.79 L745.05,327.30 L745.70,328.21 L747.46,327.70 L747.99,329.32 L746.27,329.94 L746.27,331.06 L747.99,331.68 L747.46,333.30 L745.70,332.79 L745.05,333.70 L746.08,335.21 L744.70,336.22 L743.57,334.77 L742.51,335.11 L742.46,336.94 L740.74,336.94 L740.69,335.11 L739.63,334.77 L738.50,336.22 L737.12,335.21 L738.15,333.70 L737.50,332.79 L735.74,333.30 L735.21,331.68 L736.93,331.06 L736.93,329.94 L735.21,329.32 L735.74,327.70 L737.50,328.21 L738.15,327.30 L737.12,325.79 L738.50,324.78 L739.63,326.23Z M743.30,330.50 A1.7,1.7 0 1 0 739.90,330.50 A1.7,1.7 0 1 0 743.30,330.50Z" fill="#fff" fill-rule="evenodd"/><path d="M743.66,339.16 L743.69,337.84 L744.91,337.84 L744.94,339.16 L745.69,339.41 L746.49,338.36 L747.47,339.07 L746.72,340.16 L747.18,340.79 L748.45,340.42 L748.82,341.57 L747.58,342.01 L747.58,342.79 L748.82,343.23 L748.45,344.38 L747.18,344.01 L746.72,344.64 L747.47,345.73 L746.49,346.44 L745.69,345.39 L744.94,345.64 L744.91,346.96 L743.69,346.96 L743.66,345.64 L742.91,345.39 L742.11,346.44 L741.13,345.73 L741.88,344.64 L741.42,344.01 L740.15,344.38 L739.78,343.23 L741.02,342.79 L741.02,342.01 L739.78,341.57 L740.15,340.42 L741.42,340.79 L741.88,340.16 L741.13,339.07 L742.11,338.36 L742.91,339.41Z M745.50,342.40 A1.2,1.2 0 1 0 743.10,342.40 A1.2,1.2 0 1 0 745.50,342.40Z" fill="#fff" fill-rule="evenodd"/><circle cx="816.9" cy="337.8" r="14.9" fill="#fff"/><g fill="#4a6d7c"><rect x="815" y="328.8" width="3" height="2.8"/><rect x="815" y="334.8" width="3" height="11"/><rect x="813.6" y="334.8" width="4" height="1.4"/><rect x="813.3" y="344.6" width="7" height="2.5"/></g><path d="M894.8 335 L901 328.8 L907.2 335" fill="none" stroke="#fff" stroke-width="2.6"/><circle cx="900.9" cy="337.5" r="3" fill="#fff"/><circle cx="900.9" cy="342.9" r="2.1" fill="#fff"/><circle cx="900.9" cy="346.9" r="1.5" fill="#fff"/><rect x="975.6" y="321.8" width="16.8" height="32.4" rx="8.4" fill="none" stroke="#fff" stroke-width="1.4"/><circle cx="984" cy="327.3" r="2.2" fill="#fff"/><circle cx="984" cy="332" r="1.6" fill="#fff"/><circle cx="984" cy="335.5" r="1.2" fill="#fff"/><rect x="144" y="1616.8" width="30" height="6.4" fill="#fff"/><rect x="155.8" y="1605" width="6.4" height="30" fill="#fff"/><path d="M395 1610.5 Q395 1607 399 1607 H404.8 L406 1604.8 Q406.8 1603 409 1603 H411.2 Q413.4 1603 414.3 1604.8 L415.2 1607 H419.6 Q424 1607 424 1610.5 V1611 H394 Z" fill="#fff"/><path d="M396.6 1612.2 H421.4 L418.4 1633.4 Q417.8 1637 414 1637 H404 Q400.2 1637 399.6 1633.4Z M400.3 1615.8 L402.4 1632.6 H404.1 L402.8 1615.8Z M408.3 1615.8 V1632.6 H410.1 V1615.8Z M415.4 1615.8 L414 1632.6 H415.8 L417.9 1615.8Z" fill="#fff" fill-rule="evenodd"/></svg>
<div class="t" style="left:140.84px;top:177.64px;font-size:43.59px;color:#fff;font-weight:400;transform:scaleX(0.8539);-webkit-text-stroke:1.10px #374f5b;">Noob Music</div>
<div class="t" style="left:406.82px;top:179.52px;font-size:36.00px;color:#333;font-weight:400;transform:scaleX(0.9834);-webkit-text-stroke:0.5px #333;">Search</div>
<div class="t" style="left:3079.15px;top:177.64px;font-size:43.59px;color:#fff;font-weight:400;transform:scaleX(0.8170);-webkit-text-stroke:1.10px #374f5b;">Settings</div>
<div class="t" style="left:141.39px;top:288.72px;font-size:37.59px;color:#fff;font-weight:400;transform:scaleX(0.7710);-webkit-text-stroke:1.10px #5e6f86;">Library</div>
<div class="t" style="left:140.95px;top:350.72px;font-size:37.59px;color:#1a1a1a;font-weight:400;transform:scaleX(0.8356);-webkit-text-stroke:1.10px #aabdc6;">Hip-Hop</div>
<div class="t" style="left:142.14px;top:412.22px;font-size:37.59px;color:#fff;font-weight:400;transform:scaleX(0.8276);-webkit-text-stroke:1.10px #5e6f86;">drumandbass</div>
<div class="t" style="left:184.37px;top:1600.72px;font-size:37.59px;color:#fff;font-weight:400;transform:scaleX(0.7787);-webkit-text-stroke:1.10px #5e6f86;">New Playlist</div>
<div class="t" style="left:434.00px;top:1600.72px;font-size:37.59px;color:#fff;font-weight:400;transform:scaleX(0.7851);-webkit-text-stroke:1.10px #5e6f86;">Trash</div>
<div class="t" style="left:1441.30px;top:258.72px;font-size:37.59px;color:#222;font-weight:400;transform:scaleX(0.8123);-webkit-text-stroke:1.10px #e0e6df;">Dear God - Shyheim (ft. Pop &quot;The Brown Hornet&quot;) - The Lost Generation</div>
<div class="t" style="left:619.97px;top:401.26px;font-size:34.59px;color:#fff;font-weight:400;transform:scaleX(0.9865);-webkit-text-stroke:1.10px #4a6d7c;">3:25</div>
<div class="t" style="left:3173.91px;top:401.26px;font-size:34.59px;color:#fff;font-weight:400;transform:scaleX(1.0405);-webkit-text-stroke:1.10px #4a6d7c;">0:58</div>
<div class="t" style="left:908.00px;top:459.94px;font-size:35.50px;color:#fff;font-weight:700;transform:scaleX(0.9700);">Title</div>
<div class="t" style="left:1584.00px;top:459.94px;font-size:35.50px;color:#fff;font-weight:700;transform:scaleX(0.9700);">Artist</div>
<div class="t" style="left:1822.60px;top:459.94px;font-size:35.50px;color:#fff;font-weight:700;transform:scaleX(0.9700);">Album</div>
<div class="t" style="left:2100.00px;top:459.94px;font-size:35.50px;color:#fff;font-weight:700;transform:scaleX(0.9700);">Year</div>
<div class="t" style="left:2301.66px;top:459.94px;font-size:35.50px;color:#fff;font-weight:700;transform:scaleX(0.9700);">Length</div>
<div class="t" style="left:2597.56px;top:459.94px;font-size:35.50px;color:#fff;font-weight:700;transform:scaleX(0.9700);">Plays</div>
<div class="t" style="left:2836.00px;top:459.94px;font-size:35.50px;color:#fff;font-weight:700;transform:scaleX(0.9700);">Tags</div>
<div class="t" style="left:3035.96px;top:459.94px;font-size:35.50px;color:#fff;font-weight:700;transform:scaleX(0.9700);">Rating</div>
<div class="t" style="left:615.14px;top:510.41px;font-size:35.59px;color:#fff;font-weight:400;transform:scaleX(0.8883);-webkit-text-stroke:1.10px #2d454b;">19</div>
<div class="t" style="left:894.33px;top:508.72px;font-size:37.59px;color:#fff;font-weight:400;transform:scaleX(0.8015);-webkit-text-stroke:1.10px #2d454b;">Bet Ya Man Can't (Triz) (feat. Fat Joe, Cuban Li…</div>
<div class="t" style="left:1570.26px;top:508.72px;font-size:37.59px;color:#fff;font-weight:400;transform:scaleX(0.8346);-webkit-text-stroke:1.10px #2d454b;">Big Pun</div>
<div class="t" style="left:1809.34px;top:508.72px;font-size:37.59px;color:#fff;font-weight:400;transform:scaleX(0.7944);-webkit-text-stroke:1.10px #2d454b;">Universal Punish…</div>
<div class="t" style="left:2289.45px;top:510.41px;font-size:35.59px;color:#fff;font-weight:400;transform:scaleX(0.9075);-webkit-text-stroke:1.10px #2d454b;">5:01</div>
<div class="t" style="left:616.07px;top:554.41px;font-size:35.59px;color:#fff;font-weight:400;transform:scaleX(0.8883);-webkit-text-stroke:1.10px #2d454b;">20</div>
<div class="t" style="left:894.35px;top:552.72px;font-size:37.59px;color:#fff;font-weight:400;transform:scaleX(0.7882);-webkit-text-stroke:1.10px #2d454b;">My Kinda Nigga Part II (feat Heather B)</div>
<div class="t" style="left:1570.17px;top:552.72px;font-size:37.59px;color:#fff;font-weight:400;transform:scaleX(0.8746);-webkit-text-stroke:1.10px #2d454b;">M.O.P.</div>
<div class="t" style="left:1809.38px;top:552.72px;font-size:37.59px;color:#fff;font-weight:400;transform:scaleX(0.7776);-webkit-text-stroke:1.10px #2d454b;">First Family 4 Life</div>
<div class="t" style="left:2290.40px;top:554.41px;font-size:35.59px;color:#fff;font-weight:400;transform:scaleX(0.9075);-webkit-text-stroke:1.10px #2d454b;">4:07</div>
<div class="t" style="left:2585.00px;top:554.41px;font-size:35.59px;color:#fff;font-weight:400;transform:scaleX(0.9552);-webkit-text-stroke:1.10px #2d454b;">1</div>
<div class="t" style="left:616.07px;top:598.41px;font-size:35.59px;color:#fff;font-weight:400;transform:scaleX(0.8883);-webkit-text-stroke:1.10px #2d454b;">21</div>
<div class="t" style="left:894.28px;top:596.72px;font-size:37.59px;color:#fff;font-weight:400;transform:scaleX(0.8215);-webkit-text-stroke:1.10px #2d454b;">My Kinda Nigga feat. M.O.P.</div>
<div class="t" style="left:1570.28px;top:596.72px;font-size:37.59px;color:#fff;font-weight:400;transform:scaleX(0.8246);-webkit-text-stroke:1.10px #2d454b;">Heather B</div>
<div class="t" style="left:1811.00px;top:596.72px;font-size:37.59px;color:#fff;font-weight:400;transform:scaleX(0.7949);-webkit-text-stroke:1.10px #2d454b;">Takin Mine</div>
<div class="t" style="left:2290.40px;top:598.41px;font-size:35.59px;color:#fff;font-weight:400;transform:scaleX(0.9075);-webkit-text-stroke:1.10px #2d454b;">4:16</div>
<div class="t" style="left:2585.00px;top:598.41px;font-size:35.59px;color:#fff;font-weight:400;transform:scaleX(0.9552);-webkit-text-stroke:1.10px #2d454b;">1</div>
<div class="t" style="left:616.07px;top:642.41px;font-size:35.59px;color:#fff;font-weight:400;transform:scaleX(0.8883);-webkit-text-stroke:1.10px #2d454b;">22</div>
<div class="t" style="left:896.00px;top:640.72px;font-size:37.59px;color:#fff;font-weight:400;transform:scaleX(0.7981);-webkit-text-stroke:1.10px #2d454b;">What You See (Remix)</div>
<div class="t" style="left:1570.26px;top:640.72px;font-size:37.59px;color:#fff;font-weight:400;transform:scaleX(0.8341);-webkit-text-stroke:1.10px #2d454b;">Dove Shack</div>
<div class="t" style="left:1809.31px;top:640.72px;font-size:37.59px;color:#fff;font-weight:400;transform:scaleX(0.8094);-webkit-text-stroke:1.10px #2d454b;">Reality Has Got …</div>
<div class="t" style="left:2289.45px;top:642.41px;font-size:35.59px;color:#fff;font-weight:400;transform:scaleX(0.9075);-webkit-text-stroke:1.10px #2d454b;">3:38</div>
<div class="t" style="left:2585.00px;top:642.41px;font-size:35.59px;color:#fff;font-weight:400;transform:scaleX(0.9552);-webkit-text-stroke:1.10px #2d454b;">1</div>
<div class="t" style="left:616.07px;top:686.41px;font-size:35.59px;color:#fff;font-weight:400;transform:scaleX(0.8883);-webkit-text-stroke:1.10px #2d454b;">23</div>
<div class="t" style="left:896.00px;top:684.72px;font-size:37.59px;color:#fff;font-weight:400;transform:scaleX(0.8187);-webkit-text-stroke:1.10px #2d454b;">Ain't No Game</div>
<div class="t" style="left:1570.33px;top:684.72px;font-size:37.59px;color:#fff;font-weight:400;transform:scaleX(0.7976);-webkit-text-stroke:1.10px #2d454b;">Masta Ace Inc.…</div>
<div class="t" style="left:1810.15px;top:684.72px;font-size:37.59px;color:#fff;font-weight:400;transform:scaleX(0.8187);-webkit-text-stroke:1.10px #2d454b;">Sittin' On Chrome</div>
<div class="t" style="left:2290.40px;top:686.41px;font-size:35.59px;color:#fff;font-weight:400;transform:scaleX(0.9075);-webkit-text-stroke:1.10px #2d454b;">4:55</div>
<div class="t" style="left:2585.00px;top:686.41px;font-size:35.59px;color:#fff;font-weight:400;transform:scaleX(0.9552);-webkit-text-stroke:1.10px #2d454b;">1</div>
<div class="t" style="left:616.07px;top:730.41px;font-size:35.59px;color:#fff;font-weight:400;transform:scaleX(0.8883);-webkit-text-stroke:1.10px #2d454b;">24</div>
<div class="t" style="left:896.00px;top:728.72px;font-size:37.59px;color:#fff;font-weight:400;transform:scaleX(0.8238);-webkit-text-stroke:1.10px #2d454b;">What Would You Do</div>
<div class="t" style="left:1572.00px;top:728.72px;font-size:37.59px;color:#fff;font-weight:400;transform:scaleX(0.8311);-webkit-text-stroke:1.10px #2d454b;">Tha Dogg Pound</div>
<div class="t" style="left:1811.00px;top:728.72px;font-size:37.59px;color:#fff;font-weight:400;transform:scaleX(0.8144);-webkit-text-stroke:1.10px #2d454b;">Just Doggin'</div>
<div class="t" style="left:2289.45px;top:730.41px;font-size:35.59px;color:#fff;font-weight:400;transform:scaleX(0.9075);-webkit-text-stroke:1.10px #2d454b;">5:08</div>
<div class="t" style="left:2585.00px;top:730.41px;font-size:35.59px;color:#fff;font-weight:400;transform:scaleX(0.9552);-webkit-text-stroke:1.10px #2d454b;">1</div>
<div class="t" style="left:616.07px;top:774.41px;font-size:35.59px;color:#fff;font-weight:400;transform:scaleX(0.8883);-webkit-text-stroke:1.10px #2d454b;">25</div>
<div class="t" style="left:896.00px;top:772.72px;font-size:37.59px;color:#fff;font-weight:400;transform:scaleX(0.8154);-webkit-text-stroke:1.10px #2d454b;">Ain't Nobody Happenin' Feat. Motion Man</div>
<div class="t" style="left:1570.39px;top:772.72px;font-size:37.59px;color:#fff;font-weight:400;transform:scaleX(0.7699);-webkit-text-stroke:1.10px #2d454b;">Ultra</div>
<div class="t" style="left:1809.30px;top:772.72px;font-size:37.59px;color:#fff;font-weight:400;transform:scaleX(0.8137);-webkit-text-stroke:1.10px #2d454b;">Big Time</div>
<div class="t" style="left:2290.40px;top:774.41px;font-size:35.59px;color:#fff;font-weight:400;transform:scaleX(0.9075);-webkit-text-stroke:1.10px #2d454b;">4:37</div>
<div class="t" style="left:2585.00px;top:774.41px;font-size:35.59px;color:#fff;font-weight:400;transform:scaleX(0.9552);-webkit-text-stroke:1.10px #2d454b;">1</div>
<div class="t" style="left:616.07px;top:818.41px;font-size:35.59px;color:#fff;font-weight:400;transform:scaleX(0.8883);-webkit-text-stroke:1.10px #2d454b;">26</div>
<div class="t" style="left:894.21px;top:816.72px;font-size:37.59px;color:#fff;font-weight:400;transform:scaleX(0.8552);-webkit-text-stroke:1.10px #2d454b;">Bucktown</div>
<div class="t" style="left:1571.13px;top:816.72px;font-size:37.59px;color:#fff;font-weight:400;transform:scaleX(0.8290);-webkit-text-stroke:1.10px #2d454b;">Smif-N-Wessun</div>
<div class="t" style="left:1809.33px;top:816.72px;font-size:37.59px;color:#fff;font-weight:400;transform:scaleX(0.7985);-webkit-text-stroke:1.10px #2d454b;">Dah Shinin'</div>
<div class="t" style="left:2290.40px;top:818.41px;font-size:35.59px;color:#fff;font-weight:400;transform:scaleX(0.9075);-webkit-text-stroke:1.10px #2d454b;">4:08</div>
<div class="t" style="left:2585.00px;top:818.41px;font-size:35.59px;color:#fff;font-weight:400;transform:scaleX(0.9552);-webkit-text-stroke:1.10px #2d454b;">1</div>
<div class="t" style="left:616.07px;top:862.41px;font-size:35.59px;color:#fff;font-weight:400;transform:scaleX(0.8883);-webkit-text-stroke:1.10px #2d454b;">27</div>
<div class="t" style="left:895.14px;top:860.72px;font-size:37.59px;color:#fff;font-weight:400;transform:scaleX(0.8242);-webkit-text-stroke:1.10px #2d454b;">Craig Mack</div>
<div class="t" style="left:1572.00px;top:860.72px;font-size:37.59px;color:#fff;font-weight:400;transform:scaleX(0.8236);-webkit-text-stroke:1.10px #2d454b;">Tony Touch</div>
<div class="t" style="left:1809.26px;top:860.72px;font-size:37.59px;color:#fff;font-weight:400;transform:scaleX(0.8329);-webkit-text-stroke:1.10px #2d454b;">Power Cypha 3 (…</div>
<div class="t" style="left:2289.45px;top:862.41px;font-size:35.59px;color:#fff;font-weight:400;transform:scaleX(0.9075);-webkit-text-stroke:1.10px #2d454b;">2:07</div>
<div class="t" style="left:2585.00px;top:862.41px;font-size:35.59px;color:#fff;font-weight:400;transform:scaleX(0.9552);-webkit-text-stroke:1.10px #2d454b;">1</div>
<div class="t" style="left:616.07px;top:906.41px;font-size:35.59px;color:#fff;font-weight:400;transform:scaleX(0.8883);-webkit-text-stroke:1.10px #2d454b;">28</div>
<div class="t" style="left:894.29px;top:904.72px;font-size:37.59px;color:#fff;font-weight:400;transform:scaleX(0.8190);-webkit-text-stroke:1.10px #2d454b;">Nuthin' But Music</div>
<div class="t" style="left:1570.32px;top:904.72px;font-size:37.59px;color:#fff;font-weight:400;transform:scaleX(0.8060);-webkit-text-stroke:1.10px #2d454b;">Krayzie Bone</div>
<div class="t" style="left:1810.16px;top:904.72px;font-size:37.59px;color:#fff;font-weight:400;transform:scaleX(0.8068);-webkit-text-stroke:1.10px #2d454b;">Gemini: Good Vs.…</div>
<div class="t" style="left:2289.45px;top:906.41px;font-size:35.59px;color:#fff;font-weight:400;transform:scaleX(0.9075);-webkit-text-stroke:1.10px #2d454b;">3:57</div>
<div class="t" style="left:2585.00px;top:906.41px;font-size:35.59px;color:#fff;font-weight:400;transform:scaleX(0.9552);-webkit-text-stroke:1.10px #2d454b;">1</div>
<div class="t" style="left:616.07px;top:950.41px;font-size:35.59px;color:#fff;font-weight:400;transform:scaleX(0.8883);-webkit-text-stroke:1.10px #2d454b;">29</div>
<div class="t" style="left:896.00px;top:948.72px;font-size:37.59px;color:#fff;font-weight:400;transform:scaleX(0.8083);-webkit-text-stroke:1.10px #2d454b;">The Piece Maker</div>
<div class="t" style="left:1572.00px;top:948.72px;font-size:37.59px;color:#fff;font-weight:400;transform:scaleX(0.8236);-webkit-text-stroke:1.10px #2d454b;">Tony Touch</div>
<div class="t" style="left:1811.00px;top:948.72px;font-size:37.59px;color:#fff;font-weight:400;transform:scaleX(0.8090);-webkit-text-stroke:1.10px #2d454b;">The Piece Maker</div>
<div class="t" style="left:2289.45px;top:950.41px;font-size:35.59px;color:#fff;font-weight:400;transform:scaleX(0.9075);-webkit-text-stroke:1.10px #2d454b;">2:42</div>
<div class="t" style="left:2585.00px;top:950.41px;font-size:35.59px;color:#fff;font-weight:400;transform:scaleX(0.9552);-webkit-text-stroke:1.10px #2d454b;">1</div>
<div class="t" style="left:616.07px;top:994.41px;font-size:35.59px;color:#fff;font-weight:400;transform:scaleX(0.8883);-webkit-text-stroke:1.10px #2d454b;">30</div>
<div class="t" style="left:896.00px;top:992.72px;font-size:37.59px;color:#fff;font-weight:400;transform:scaleX(0.8007);-webkit-text-stroke:1.10px #2d454b;">Wherever You Are</div>
<div class="t" style="left:1570.26px;top:992.72px;font-size:37.59px;color:#fff;font-weight:400;transform:scaleX(0.8327);-webkit-text-stroke:1.10px #2d454b;">Mic Geronimo</div>
<div class="t" style="left:1811.00px;top:992.72px;font-size:37.59px;color:#fff;font-weight:400;transform:scaleX(0.7945);-webkit-text-stroke:1.10px #2d454b;">The Natural</div>
<div class="t" style="left:2290.40px;top:994.41px;font-size:35.59px;color:#fff;font-weight:400;transform:scaleX(0.9075);-webkit-text-stroke:1.10px #2d454b;">4:46</div>
<div class="t" style="left:616.07px;top:1038.41px;font-size:35.59px;color:#fff;font-weight:400;transform:scaleX(0.8883);-webkit-text-stroke:1.10px #2d454b;">31</div>
<div class="t" style="left:894.30px;top:1036.72px;font-size:37.59px;color:#fff;font-weight:400;transform:scaleX(0.8158);-webkit-text-stroke:1.10px #2d454b;">Rodney O &amp; Joe Cooley - Fo Funky Stories</div>
<div class="t" style="left:1569.39px;top:1036.72px;font-size:37.59px;color:#fff;font-weight:400;transform:scaleX(0.8328);-webkit-text-stroke:1.10px #2d454b;">Ikee 4Sho</div>
<div class="t" style="left:2289.45px;top:1038.41px;font-size:35.59px;color:#fff;font-weight:400;transform:scaleX(0.9075);-webkit-text-stroke:1.10px #2d454b;">5:00</div>
<div class="t" style="left:2585.00px;top:1038.41px;font-size:35.59px;color:#fff;font-weight:400;transform:scaleX(0.9552);-webkit-text-stroke:1.10px #2d454b;">1</div>
<div class="t" style="left:616.07px;top:1082.41px;font-size:35.59px;color:#fff;font-weight:400;transform:scaleX(0.8883);-webkit-text-stroke:1.10px #2d454b;">32</div>
<div class="t" style="left:894.32px;top:1080.72px;font-size:37.59px;color:#fff;font-weight:400;transform:scaleX(0.8026);-webkit-text-stroke:1.10px #2d454b;">Blue Black (Ghetto Dark Mix)</div>
<div class="t" style="left:1570.32px;top:1080.72px;font-size:37.59px;color:#fff;font-weight:400;transform:scaleX(0.8054);-webkit-text-stroke:1.10px #2d454b;">Black Eye</div>
<div class="t" style="left:1809.29px;top:1080.72px;font-size:37.59px;color:#fff;font-weight:400;transform:scaleX(0.8194);-webkit-text-stroke:1.10px #2d454b;">Blue Black</div>
<div class="t" style="left:2289.45px;top:1082.41px;font-size:35.59px;color:#fff;font-weight:400;transform:scaleX(0.9075);-webkit-text-stroke:1.10px #2d454b;">3:26</div>
<div class="t" style="left:2585.00px;top:1082.41px;font-size:35.59px;color:#fff;font-weight:400;transform:scaleX(0.9552);-webkit-text-stroke:1.10px #2d454b;">1</div>
<div class="t" style="left:616.07px;top:1126.41px;font-size:35.59px;color:#fff;font-weight:400;transform:scaleX(0.8883);-webkit-text-stroke:1.10px #2d454b;">33</div>
<div class="t" style="left:896.00px;top:1124.72px;font-size:37.59px;color:#fff;font-weight:400;transform:scaleX(0.7875);-webkit-text-stroke:1.10px #2d454b;">You Came Up (Featuring Noriega) (Explicit Versi…</div>
<div class="t" style="left:1570.30px;top:1124.72px;font-size:37.59px;color:#fff;font-weight:400;transform:scaleX(0.8132);-webkit-text-stroke:1.10px #2d454b;">Big Punisher f…</div>
<div class="t" style="left:1809.29px;top:1124.72px;font-size:37.59px;color:#fff;font-weight:400;transform:scaleX(0.8169);-webkit-text-stroke:1.10px #2d454b;">Louder Than Eve…</div>
<div class="t" style="left:2289.45px;top:1126.41px;font-size:35.59px;color:#fff;font-weight:400;transform:scaleX(0.9075);-webkit-text-stroke:1.10px #2d454b;">3:56</div>
<div class="t" style="left:2585.00px;top:1126.41px;font-size:35.59px;color:#fff;font-weight:400;transform:scaleX(0.9552);-webkit-text-stroke:1.10px #2d454b;">0</div>
<div class="t" style="left:616.07px;top:1170.41px;font-size:35.59px;color:#fff;font-weight:400;transform:scaleX(0.8883);-webkit-text-stroke:1.10px #2d454b;">34</div>
<div class="t" style="left:894.28px;top:1168.72px;font-size:37.59px;color:#fff;font-weight:400;transform:scaleX(0.8231);-webkit-text-stroke:1.10px #2d454b;">Rodney O &amp; Joe Cooley - Why Must I Be Like …</div>
<div class="t" style="left:1570.24px;top:1168.72px;font-size:37.59px;color:#fff;font-weight:400;transform:scaleX(0.8430);-webkit-text-stroke:1.10px #2d454b;">Rodney O &amp; J…</div>
<div class="t" style="left:2290.40px;top:1170.41px;font-size:35.59px;color:#fff;font-weight:400;transform:scaleX(0.9075);-webkit-text-stroke:1.10px #2d454b;">4:06</div>
<div class="t" style="left:2585.00px;top:1170.41px;font-size:35.59px;color:#fff;font-weight:400;transform:scaleX(0.9552);-webkit-text-stroke:1.10px #2d454b;">0</div>
<div class="t" style="left:616.07px;top:1214.41px;font-size:35.59px;color:#fff;font-weight:400;transform:scaleX(0.8883);-webkit-text-stroke:1.10px #2d454b;">35</div>
<div class="t" style="left:894.25px;top:1212.72px;font-size:37.59px;color:#fff;font-weight:400;transform:scaleX(0.8384);-webkit-text-stroke:1.10px #2d454b;">11 Untitled Groove.mp3</div>
<div class="t" style="left:2289.45px;top:1214.41px;font-size:35.59px;color:#fff;font-weight:400;transform:scaleX(0.9075);-webkit-text-stroke:1.10px #2d454b;">5:13</div>
<div class="t" style="left:2585.00px;top:1214.41px;font-size:35.59px;color:#fff;font-weight:400;transform:scaleX(0.9552);-webkit-text-stroke:1.10px #2d454b;">0</div>
<div class="t" style="left:616.07px;top:1258.41px;font-size:35.59px;color:#fff;font-weight:400;transform:scaleX(0.8883);-webkit-text-stroke:1.10px #2d454b;">36</div>
<div class="t" style="left:894.25px;top:1256.72px;font-size:37.59px;color:#fff;font-weight:400;transform:scaleX(0.8392);-webkit-text-stroke:1.10px #2d454b;">No Face</div>
<div class="t" style="left:1570.40px;top:1256.72px;font-size:37.59px;color:#fff;font-weight:400;transform:scaleX(0.7674);-webkit-text-stroke:1.10px #2d454b;">Ultra</div>
<div class="t" style="left:1809.30px;top:1256.72px;font-size:37.59px;color:#fff;font-weight:400;transform:scaleX(0.8158);-webkit-text-stroke:1.10px #2d454b;">Big Time</div>
<div class="t" style="left:2289.45px;top:1258.41px;font-size:35.59px;color:#fff;font-weight:400;transform:scaleX(0.9075);-webkit-text-stroke:1.10px #2d454b;">2:33</div>
<div class="t" style="left:2585.00px;top:1258.41px;font-size:35.59px;color:#fff;font-weight:400;transform:scaleX(0.9552);-webkit-text-stroke:1.10px #2d454b;">0</div>
<div class="t" style="left:616.07px;top:1302.41px;font-size:35.59px;color:#fff;font-weight:400;transform:scaleX(0.8883);-webkit-text-stroke:1.10px #2d454b;">37</div>
<div class="t" style="left:896.00px;top:1300.72px;font-size:37.59px;color:#fff;font-weight:400;transform:scaleX(0.8231);-webkit-text-stroke:1.10px #2d454b;">Tha Hitmen - Here Come Tha Hitmen - (1993)…</div>
<div class="t" style="left:1570.26px;top:1300.72px;font-size:37.59px;color:#fff;font-weight:400;transform:scaleX(0.8329);-webkit-text-stroke:1.10px #2d454b;">PunchDaClow…</div>
<div class="t" style="left:2290.40px;top:1302.41px;font-size:35.59px;color:#fff;font-weight:400;transform:scaleX(0.9075);-webkit-text-stroke:1.10px #2d454b;">4:19</div>
<div class="t" style="left:2585.00px;top:1302.41px;font-size:35.59px;color:#fff;font-weight:400;transform:scaleX(0.9552);-webkit-text-stroke:1.10px #2d454b;">0</div>
<div class="t" style="left:616.07px;top:1346.41px;font-size:35.59px;color:#fff;font-weight:400;transform:scaleX(0.8883);-webkit-text-stroke:1.10px #2d454b;">38</div>
<div class="t" style="left:894.38px;top:1344.72px;font-size:37.59px;color:#fff;font-weight:400;transform:scaleX(0.7764);-webkit-text-stroke:1.10px #2d454b;">Flamboyant (Dirty)</div>
<div class="t" style="left:1570.21px;top:1344.72px;font-size:37.59px;color:#fff;font-weight:400;transform:scaleX(0.8553);-webkit-text-stroke:1.10px #2d454b;">Big L</div>
<div class="t" style="left:1809.26px;top:1344.72px;font-size:37.59px;color:#fff;font-weight:400;transform:scaleX(0.8349);-webkit-text-stroke:1.10px #2d454b;">Flamboyant / On …</div>
<div class="t" style="left:2289.45px;top:1346.41px;font-size:35.59px;color:#fff;font-weight:400;transform:scaleX(0.9075);-webkit-text-stroke:1.10px #2d454b;">3:10</div>
<div class="t" style="left:2585.00px;top:1346.41px;font-size:35.59px;color:#fff;font-weight:400;transform:scaleX(0.9552);-webkit-text-stroke:1.10px #2d454b;">0</div>
<div class="t" style="left:616.07px;top:1390.41px;font-size:35.59px;color:#fff;font-weight:400;transform:scaleX(0.8883);-webkit-text-stroke:1.10px #2d454b;">39</div>
<div class="t" style="left:894.23px;top:1388.72px;font-size:37.59px;color:#fff;font-weight:400;transform:scaleX(0.8487);-webkit-text-stroke:1.10px #2d454b;">Mic Ammo</div>
<div class="t" style="left:1570.33px;top:1388.72px;font-size:37.59px;color:#fff;font-weight:400;transform:scaleX(0.7979);-webkit-text-stroke:1.10px #2d454b;">Royal Fam</div>
<div class="t" style="left:1811.00px;top:1388.72px;font-size:37.59px;color:#fff;font-weight:400;transform:scaleX(0.8135);-webkit-text-stroke:1.10px #2d454b;">Yesterday, Today …</div>
<div class="t" style="left:2288.50px;top:1390.41px;font-size:35.59px;color:#fff;font-weight:400;transform:scaleX(0.9075);-webkit-text-stroke:1.10px #2d454b;">1:57</div>
<div class="t" style="left:2585.00px;top:1390.41px;font-size:35.59px;color:#fff;font-weight:400;transform:scaleX(0.9552);-webkit-text-stroke:1.10px #2d454b;">0</div>
<div class="t" style="left:617.00px;top:1434.41px;font-size:35.59px;color:#fff;font-weight:400;transform:scaleX(0.8883);-webkit-text-stroke:1.10px #2d454b;">40</div>
<div class="t" style="left:896.00px;top:1432.72px;font-size:37.59px;color:#fff;font-weight:400;transform:scaleX(0.7942);-webkit-text-stroke:1.10px #2d454b;">The Main Event</div>
<div class="t" style="left:1570.26px;top:1432.72px;font-size:37.59px;color:#fff;font-weight:400;transform:scaleX(0.8321);-webkit-text-stroke:1.10px #2d454b;">Main One</div>
<div class="t" style="left:1810.14px;top:1432.72px;font-size:37.59px;color:#fff;font-weight:400;transform:scaleX(0.8198);-webkit-text-stroke:1.10px #2d454b;">Cellar Sounds Vo…</div>
<div class="t" style="left:2289.45px;top:1434.41px;font-size:35.59px;color:#fff;font-weight:400;transform:scaleX(0.9075);-webkit-text-stroke:1.10px #2d454b;">3:30</div>
<div class="t" style="left:2585.00px;top:1434.41px;font-size:35.59px;color:#fff;font-weight:400;transform:scaleX(0.9552);-webkit-text-stroke:1.10px #2d454b;">0</div>
<div class="t" style="left:617.00px;top:1478.41px;font-size:35.59px;color:#fff;font-weight:400;transform:scaleX(0.8883);-webkit-text-stroke:1.10px #2d454b;">41</div>
<div class="t" style="left:896.00px;top:1476.72px;font-size:37.59px;color:#fff;font-weight:400;transform:scaleX(0.8106);-webkit-text-stroke:1.10px #2d454b;">What They Want</div>
<div class="t" style="left:1569.56px;top:1476.72px;font-size:37.59px;color:#fff;font-weight:400;transform:scaleX(0.7798);-webkit-text-stroke:1.10px #2d454b;">Imperial</div>
<div class="t" style="left:1810.14px;top:1476.72px;font-size:37.59px;color:#fff;font-weight:400;transform:scaleX(0.8198);-webkit-text-stroke:1.10px #2d454b;">Cellar Sounds Vo…</div>
<div class="t" style="left:2289.45px;top:1478.41px;font-size:35.59px;color:#fff;font-weight:400;transform:scaleX(0.9075);-webkit-text-stroke:1.10px #2d454b;">2:07</div>
<div class="t" style="left:2585.00px;top:1478.41px;font-size:35.59px;color:#fff;font-weight:400;transform:scaleX(0.9552);-webkit-text-stroke:1.10px #2d454b;">0</div>
<div class="t" style="left:617.00px;top:1522.41px;font-size:35.59px;color:#fff;font-weight:400;transform:scaleX(0.8883);-webkit-text-stroke:1.10px #2d454b;">42</div>
<div class="t" style="left:894.23px;top:1520.72px;font-size:37.59px;color:#fff;font-weight:400;transform:scaleX(0.8495);-webkit-text-stroke:1.10px #2d454b;">Backstabbed</div>
<div class="t" style="left:1570.32px;top:1520.72px;font-size:37.59px;color:#fff;font-weight:400;transform:scaleX(0.8063);-webkit-text-stroke:1.10px #2d454b;">N.Y. Confidential</div>
<div class="t" style="left:1809.32px;top:1520.72px;font-size:37.59px;color:#fff;font-weight:400;transform:scaleX(0.8037);-webkit-text-stroke:1.10px #2d454b;">N.Y. Confidential EP</div>
<div class="t" style="left:2289.45px;top:1522.41px;font-size:35.59px;color:#fff;font-weight:400;transform:scaleX(0.9075);-webkit-text-stroke:1.10px #2d454b;">3:52</div>
<div class="t" style="left:2585.00px;top:1522.41px;font-size:35.59px;color:#fff;font-weight:400;transform:scaleX(0.9552);-webkit-text-stroke:1.10px #2d454b;">0</div>
<div class="t" style="left:617.00px;top:1566.41px;font-size:35.59px;color:#fff;font-weight:400;transform:scaleX(0.8883);-webkit-text-stroke:1.10px #2d454b;">43</div>
<div class="t" style="left:894.35px;top:1564.72px;font-size:37.59px;color:#fff;font-weight:400;transform:scaleX(0.7905);-webkit-text-stroke:1.10px #2d454b;">My Block (Nitty Remix)</div>
<div class="t" style="left:1571.11px;top:1564.72px;font-size:37.59px;color:#fff;font-weight:400;transform:scaleX(0.8493);-webkit-text-stroke:1.10px #2d454b;">2Pac</div>
<div class="t" style="left:1809.32px;top:1564.72px;font-size:37.59px;color:#fff;font-weight:400;transform:scaleX(0.8061);-webkit-text-stroke:1.10px #2d454b;">Better Dayz (CD2)</div>
<div class="t" style="left:2289.45px;top:1566.41px;font-size:35.59px;color:#fff;font-weight:400;transform:scaleX(0.9075);-webkit-text-stroke:1.10px #2d454b;">5:22</div>
<div class="t" style="left:617.00px;top:1610.41px;font-size:35.59px;color:#fff;font-weight:400;transform:scaleX(0.8883);-webkit-text-stroke:1.10px #253840;">44</div>
<div class="t" style="left:894.24px;top:1608.72px;font-size:37.59px;color:#fff;font-weight:400;transform:scaleX(0.8432);-webkit-text-stroke:1.10px #253840;">Dear God</div>
<div class="t" style="left:1571.16px;top:1608.72px;font-size:37.59px;color:#fff;font-weight:400;transform:scaleX(0.8087);-webkit-text-stroke:1.10px #253840;">Shyheim (ft. P…</div>
<div class="t" style="left:1811.00px;top:1608.72px;font-size:37.59px;color:#fff;font-weight:400;transform:scaleX(0.8187);-webkit-text-stroke:1.10px #253840;">The Lost Generat…</div>
<div class="t" style="left:617.00px;top:1654.41px;font-size:35.59px;color:#fff;font-weight:400;transform:scaleX(0.8883);-webkit-text-stroke:1.10px #2d454b;">45</div>
<div class="t" style="left:896.00px;top:1652.72px;font-size:37.59px;color:#fff;font-weight:400;transform:scaleX(0.7919);-webkit-text-stroke:1.10px #2d454b;">4, 3, 2, 1 (feat. Redman, Method Man, Canibus…</div>
<div class="t" style="left:1570.30px;top:1652.72px;font-size:37.59px;color:#fff;font-weight:400;transform:scaleX(0.8140);-webkit-text-stroke:1.10px #2d454b;">LL Cool J</div>
<div class="t" style="left:1809.30px;top:1652.72px;font-size:37.59px;color:#fff;font-weight:400;transform:scaleX(0.8140);-webkit-text-stroke:1.10px #2d454b;">Phenomenon</div>
<div class="a" style="left:614px;top:1666px;width:2634px;height:10px;background:#4a6d7c;"></div>
</div></div>
</body></html>
